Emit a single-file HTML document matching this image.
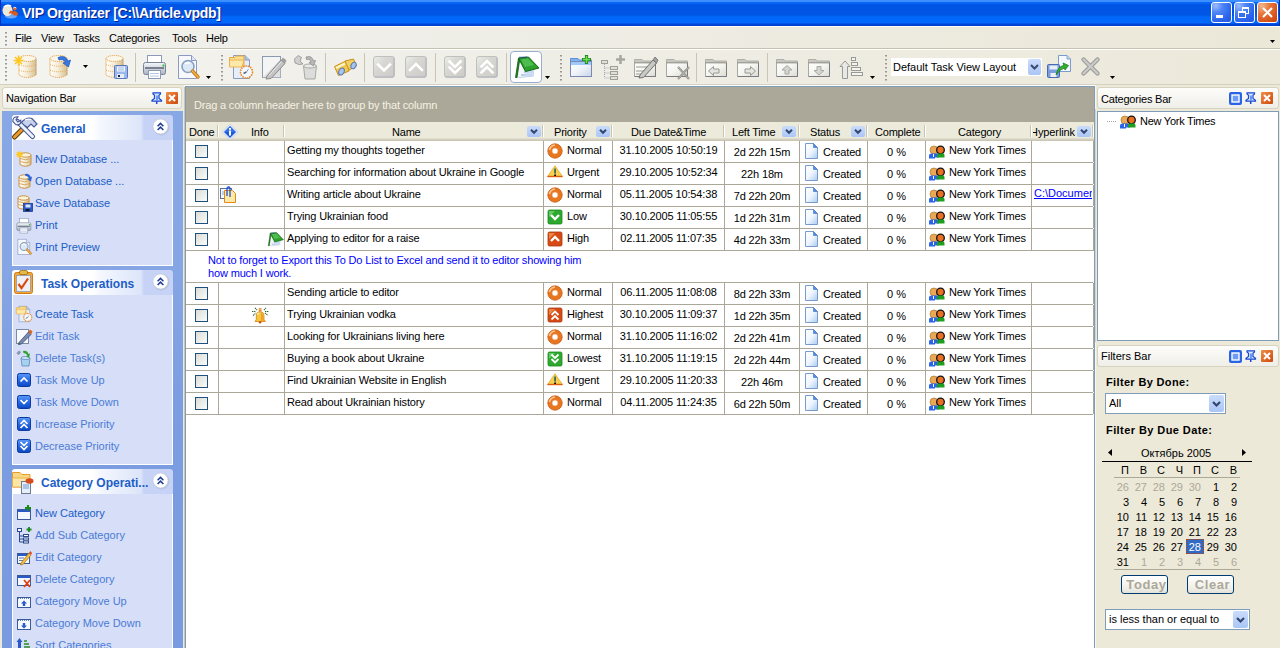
<!DOCTYPE html><html><head><meta charset="utf-8"><style>
*{margin:0;padding:0;box-sizing:border-box}
html,body{width:1280px;height:648px;overflow:hidden;background:#ECE9D8;font-family:"Liberation Sans",sans-serif;font-size:11px;color:#000}
body{position:relative}
.a{position:absolute}
.t{position:absolute;white-space:nowrap;line-height:13px}
svg{position:absolute;overflow:visible}
</style></head><body>
<div class="a" style="left:0px;top:0px;width:1280px;height:26px;background:linear-gradient(#3D8EFF 0,#3D8EFF 2px,#0866F6 2px,#0866F6 4px,#0055E5 4px,#0055E5 15px,#0062F2 16px,#0068FA 17px,#0069FB 23px,#0046D8 24px,#0040D0 26px)"></div>
<div class="a" style="left:0px;top:0px;width:1px;height:26px;background:#0030C0"></div>
<div class="a" style="left:1279px;top:0px;width:1px;height:26px;background:#0030C0"></div>
<div class="t" style="left:22px;top:5px;color:#fff;font-weight:bold;font-size:14px;line-height:17px;letter-spacing:-0.3px;text-shadow:1px 1px 0 #0A1E8C">VIP Organizer [C:\\Article.vpdb]</div>
<svg style="left:1px;top:1px;" width="19" height="19" viewBox="0 0 19 19"><ellipse cx="10" cy="15" rx="6" ry="2.5" fill="#9EC0F4" opacity="0.7"/><ellipse cx="6.5" cy="9.5" rx="5" ry="5.5" fill="#ECE8DC"/><path d="M3 6Q6 3 10 5" stroke="#fff" stroke-width="1.5" fill="none"/><path d="M7.5 12.5L9.5 9.5L12.5 10.5L14 10L17 12L16.5 14.5L13 14.5L11.5 12.5Z" fill="#E05A10"/><circle cx="13.8" cy="7.8" r="1.8" fill="#E8601A"/><path d="M12.3 7Q13.8 5.5 15.3 7" stroke="#fff" stroke-width="0.9" fill="none"/></svg>
<div class="a" style="left:1211px;top:2px;width:21px;height:21px;border:1px solid #fff;border-radius:3px;background:radial-gradient(circle at 20% 15%,#9DBCFF 0,#4F86F5 30%,#2A64EE 70%,#2058E0 100%)"><div class="a" style="left:4px;top:12px;width:7px;height:3px;background:#fff"></div></div>
<div class="a" style="left:1234px;top:2px;width:21px;height:21px;border:1px solid #fff;border-radius:3px;background:radial-gradient(circle at 20% 15%,#9DBCFF 0,#4F86F5 30%,#2A64EE 70%,#2058E0 100%)"><div class="a" style="left:7px;top:4px;width:7px;height:7px;border:1px solid #fff;border-top-width:2px"></div><div class="a" style="left:3px;top:8px;width:8px;height:7px;border:1px solid #fff;border-top-width:2px;background:#3A6EEE"></div></div>
<div class="a" style="left:1257px;top:2px;width:21px;height:21px;border:1px solid #fff;border-radius:3px;background:radial-gradient(circle at 20% 15%,#F0B890 0,#E8783C 35%,#D5521A 75%,#C84510 100%)"><svg style="left:4px;top:4px" width="11" height="11"><path d="M1 1L10 10M10 1L1 10" stroke="#fff" stroke-width="2"/></svg></div>
<div class="a" style="left:0px;top:26px;width:1280px;height:1px;background:#FFFBF0"></div>
<div class="a" style="left:0px;top:27px;width:1280px;height:21px;background:linear-gradient(90deg,#F2F2EE 0,#EFEEE8 30%,#EBE8D8 100%)"></div>
<div class="a" style="left:0px;top:48px;width:1280px;height:1px;background:#C5C2B2"></div>
<div class="a" style="left:5px;top:32px;width:2px;height:14px;background:repeating-linear-gradient(#9C9A90 0 1px,#C4C2B8 1px 2px,transparent 2px 4px)"></div>
<div class="t" style="left:15px;top:32px;letter-spacing:-0.25px">File</div>
<div class="t" style="left:41px;top:32px;letter-spacing:-0.25px">View</div>
<div class="t" style="left:73px;top:32px;letter-spacing:-0.25px">Tasks</div>
<div class="t" style="left:109px;top:32px;letter-spacing:-0.25px">Categories</div>
<div class="t" style="left:172px;top:32px;letter-spacing:-0.25px">Tools</div>
<div class="t" style="left:206px;top:32px;letter-spacing:-0.25px">Help</div>
<svg style="left:1270px;top:40px;" width="5" height="3" viewBox="0 0 5 3"><path d="M0 0H5L2.5 3Z" fill="#000"/></svg>
<div class="a" style="left:0px;top:49px;width:1280px;height:1px;background:#FFFFFF"></div>
<div class="a" style="left:0px;top:50px;width:1280px;height:34px;background:linear-gradient(90deg,#F4F4F0 0,#F0EFE9 30%,#ECE9DA 100%)"></div>
<div class="a" style="left:0px;top:84px;width:1280px;height:1px;background:#D5D1C0"></div>
<div class="a" style="left:5px;top:55px;width:2px;height:26px;background:repeating-linear-gradient(#9C9A90 0 1px,#C4C2B8 1px 2px,transparent 2px 4px)"></div>
<div class="a" style="left:221px;top:55px;width:2px;height:26px;background:repeating-linear-gradient(#9C9A90 0 1px,#C4C2B8 1px 2px,transparent 2px 4px)"></div>
<div class="a" style="left:560px;top:55px;width:2px;height:26px;background:repeating-linear-gradient(#9C9A90 0 1px,#C4C2B8 1px 2px,transparent 2px 4px)"></div>
<div class="a" style="left:885px;top:55px;width:2px;height:26px;background:repeating-linear-gradient(#9C9A90 0 1px,#C4C2B8 1px 2px,transparent 2px 4px)"></div>
<div class="a" style="left:135px;top:53px;width:1px;height:29px;background:#C8C5B5"></div>
<div class="a" style="left:325px;top:53px;width:1px;height:29px;background:#C8C5B5"></div>
<div class="a" style="left:364px;top:53px;width:1px;height:29px;background:#C8C5B5"></div>
<div class="a" style="left:435px;top:53px;width:1px;height:29px;background:#C8C5B5"></div>
<div class="a" style="left:506px;top:53px;width:1px;height:29px;background:#C8C5B5"></div>
<div class="a" style="left:696px;top:53px;width:1px;height:29px;background:#C8C5B5"></div>
<div class="a" style="left:767px;top:53px;width:1px;height:29px;background:#C8C5B5"></div>
<div class="a" style="left:510px;top:51px;width:32px;height:32px;border:1px solid #98AED0;border-radius:4px;background:#FFFFFF"></div>
<svg style="left:13px;top:55px;" width="25" height="25" viewBox="0 0 25 25"><g transform="translate(5,0)"><defs><linearGradient id="g1" x1="0" y1="0" x2="1" y2="0"><stop offset="0" stop-color="#FFFFFF"/><stop offset="0.45" stop-color="#F6EEDC"/><stop offset="1" stop-color="#D8C090"/></linearGradient></defs><path d="M1 3.5V20Q9.5 25 18 20V3.5" fill="url(#g1)" stroke="#E8A040" stroke-width="1" stroke-dasharray="1.2 0.8"/><ellipse cx="9.5" cy="3.5" rx="8.5" ry="3" fill="#FBF6EA" stroke="#E8A040" stroke-width="1" stroke-dasharray="1.2 0.8"/><path d="M1 9.5Q9.5 13 18 9.5M1 15Q9.5 18.5 18 15" stroke="#E8A848" stroke-width="1" fill="none" stroke-dasharray="1 1"/><path d="M18 4V20" stroke="#9A9AA8" stroke-width="0.8" opacity="0.6"/></g><path d="M0.5 5.5L10.5 5.5M2.0 2.0L9.0 9.0M5.5 0.5L5.5 10.5M9.0 2.0L2.0 9.0" stroke="#FFC820" stroke-width="1.6"/></svg>
<svg style="left:48px;top:55px;" width="25" height="25" viewBox="0 0 25 25"><g transform="translate(1,0)"><defs><linearGradient id="g2" x1="0" y1="0" x2="1" y2="0"><stop offset="0" stop-color="#FFFFFF"/><stop offset="0.45" stop-color="#F6EEDC"/><stop offset="1" stop-color="#D8C090"/></linearGradient></defs><path d="M1 3.5V20Q9.5 25 18 20V3.5" fill="url(#g2)" stroke="#E8A040" stroke-width="1" stroke-dasharray="1.2 0.8"/><ellipse cx="9.5" cy="3.5" rx="8.5" ry="3" fill="#FBF6EA" stroke="#E8A040" stroke-width="1" stroke-dasharray="1.2 0.8"/><path d="M1 9.5Q9.5 13 18 9.5M1 15Q9.5 18.5 18 15" stroke="#E8A848" stroke-width="1" fill="none" stroke-dasharray="1 1"/><path d="M18 4V20" stroke="#9A9AA8" stroke-width="0.8" opacity="0.6"/></g><path d="M10 2.5Q17 -0.5 20 6L22.5 5L20.5 12L15 8L17.5 7.2Q15.5 3.5 11 5Z" fill="#3A78E0" stroke="#1A50B8" stroke-width="0.7"/></svg>
<svg style="left:105px;top:55px;" width="25" height="25" viewBox="0 0 25 25"><g transform="translate(0,0)"><defs><linearGradient id="g3" x1="0" y1="0" x2="1" y2="0"><stop offset="0" stop-color="#FFFFFF"/><stop offset="0.45" stop-color="#F6EEDC"/><stop offset="1" stop-color="#D8C090"/></linearGradient></defs><path d="M1 3.5V20Q9.5 25 18 20V3.5" fill="url(#g3)" stroke="#E8A040" stroke-width="1" stroke-dasharray="1.2 0.8"/><ellipse cx="9.5" cy="3.5" rx="8.5" ry="3" fill="#FBF6EA" stroke="#E8A040" stroke-width="1" stroke-dasharray="1.2 0.8"/><path d="M1 9.5Q9.5 13 18 9.5M1 15Q9.5 18.5 18 15" stroke="#E8A848" stroke-width="1" fill="none" stroke-dasharray="1 1"/><path d="M18 4V20" stroke="#9A9AA8" stroke-width="0.8" opacity="0.6"/></g><rect x="9.5" y="10.5" width="13" height="13" rx="1" fill="#9CB8EC" stroke="#5A78B8" stroke-width="1"/><rect x="12" y="11.5" width="8" height="5" fill="#F4F8FF"/><path d="M13 13H19M13 15H19" stroke="#7A98D0" stroke-width="0.7"/><rect x="12" y="19" width="7" height="4" fill="#E8ECF4"/><rect x="13" y="20" width="2" height="2" fill="#202840"/></svg>
<svg style="left:143px;top:55px;" width="25" height="25" viewBox="0 0 25 25"><defs><linearGradient id="g4" x1="0" y1="0" x2="0" y2="1"><stop offset="0" stop-color="#F4F6FA"/><stop offset="0.5" stop-color="#D0D6E0"/><stop offset="1" stop-color="#A8B0C0"/></linearGradient></defs><rect x="4.5" y="0.5" width="14" height="10" fill="#FFFFFF" stroke="#8A9AB8" stroke-width="1"/><rect x="0.5" y="7.5" width="22" height="12" rx="2" fill="url(#g4)" stroke="#7A8498" stroke-width="1"/><rect x="2" y="12" width="19" height="2" fill="#7A8090"/><rect x="5.5" y="15.5" width="12" height="8" fill="#fff" stroke="#8A9AB8" stroke-width="1"/><path d="M7 18.5H16M7 21H16" stroke="#A8B8D8" stroke-width="0.8"/><rect x="19.5" y="9.5" width="2" height="2" fill="#30C030"/></svg>
<svg style="left:178px;top:55px;" width="25" height="25" viewBox="0 0 25 25"><path d="M0.5 0.5H13.5L18.5 5.5V23.5H0.5Z" fill="#F6F8FC" stroke="#8A9AC0" stroke-width="1"/><path d="M13.5 0.5V5.5H18.5" fill="#DDE6F4" stroke="#8A9AC0" stroke-width="1"/><circle cx="10" cy="11.5" r="6" fill="#DCEAF8" stroke="#8AA0C0" stroke-width="1.6"/><path d="M7 9Q9 7 12 8" stroke="#fff" stroke-width="1.5" fill="none"/><path d="M14.5 16L20 22" stroke="#C07818" stroke-width="3.4" stroke-linecap="round"/><path d="M14.5 16L20 22" stroke="#F0B048" stroke-width="1.8" stroke-linecap="round"/></svg>
<svg style="left:229px;top:55px;" width="25" height="25" viewBox="0 0 25 25"><path d="M4.5 0.5H16L20.5 5V23.5H4.5Z" fill="#E8EEF8" stroke="#8A9AC0" stroke-width="1"/><path d="M16 0.5V5H20.5" fill="#A8C8F0" stroke="#8A9AC0" stroke-width="1"/><path d="M0.5 2.5H6L7.5 1H15V11H0.5Z" fill="#F8E090" stroke="#E8A840" stroke-width="1"/><path d="M0.5 5H15L13 12H0.5Z" fill="#FCE8A8" stroke="#E8A840" stroke-width="0.8"/><circle cx="17.5" cy="17" r="6" fill="#F4F8FF" stroke="#E88A28" stroke-width="1.6" stroke-dasharray="1.6 0.8"/><path d="M17.5 17L14.5 18.5" stroke="#5A6A88" stroke-width="1.4"/><path d="M17.5 17L19.5 14" stroke="#8A9AB0" stroke-width="1"/></svg>
<svg style="left:262px;top:55px;" width="25" height="25" viewBox="0 0 25 25"><rect x="0.5" y="1.5" width="18" height="21" fill="#F4F4F4" stroke="#8A9AB0" stroke-width="1"/><path d="M0.5 22.5L18.5 4.5V22.5Z" fill="#D8D8D8" opacity="0.7"/><path d="M5 21L19 5L23 8.5L9 23.5L4 24Z" fill="#C4C4C4" stroke="#8A8A8A" stroke-width="1"/><path d="M7 20.5L19.5 6.5" stroke="#E8E8E8" stroke-width="1"/><path d="M19 5L21 2.5L24.5 5.5L23 8.5Z" fill="#A0A0A0"/></svg>
<svg style="left:294px;top:55px;" width="25" height="25" viewBox="0 0 25 25"><path d="M9.5 11H22.5L21 24H11Z" fill="#DCDCDA" stroke="#A8A8A4" stroke-width="1"/><ellipse cx="16" cy="11" rx="6.5" ry="2" fill="#EAEAE8" stroke="#A8A8A4" stroke-width="1"/><path d="M0.5 4L4 0.5L7.5 2.5L6 6L9 9L5 9.5L1 8Z" fill="#D0D0D0" stroke="#909090" stroke-width="0.8"/><path d="M12 2Q18 0 19.5 6L21.5 5.5L19.5 11L15 7.5L17 7Q16 3.5 12.5 4.5Z" fill="#B8B8B8" stroke="#888" stroke-width="0.7"/></svg>
<svg style="left:333px;top:58px;" width="25" height="25" viewBox="0 0 25 25"><path d="M1.5 8.5L13 3L15.5 7L16 13L5.5 17.5Z" fill="#F0C850" stroke="#C89020" stroke-width="1"/><path d="M3 10L12 5.5" stroke="#FFF4C8" stroke-width="2"/><path d="M12 3L20.5 1L23.5 8L16 12Z" fill="#F4D060" stroke="#C89020" stroke-width="1"/><ellipse cx="8.5" cy="13.5" rx="2.6" ry="3.6" transform="rotate(25 8.5 13.5)" fill="#A8C4F0" stroke="#5A78B0" stroke-width="1"/><ellipse cx="20.5" cy="7.5" rx="2.4" ry="3.4" transform="rotate(25 20.5 7.5)" fill="#A8C4F0" stroke="#5A78B0" stroke-width="1"/></svg>
<svg style="left:373px;top:56px;" width="25" height="25" viewBox="0 0 25 25"><defs><linearGradient id="g5" x1="0" y1="0" x2="1" y2="1"><stop offset="0" stop-color="#EEEEEC"/><stop offset="0.35" stop-color="#D8D8D4"/><stop offset="1" stop-color="#CCCAC4"/></linearGradient></defs><rect x="0.5" y="0.5" width="21" height="21" rx="2.5" fill="url(#g5)" stroke="#C0C0BC" stroke-width="1"/><path d="M1.5 20.5H20.5V1.5" stroke="#A8B0C8" stroke-width="1" fill="none" stroke-dasharray="1 1"/><path d="M5 8.5L11 14.5L17 8.5" stroke="#fff" stroke-width="2.6" fill="none" stroke-linecap="square"/></svg>
<svg style="left:405px;top:56px;" width="25" height="25" viewBox="0 0 25 25"><defs><linearGradient id="g6" x1="0" y1="0" x2="1" y2="1"><stop offset="0" stop-color="#EEEEEC"/><stop offset="0.35" stop-color="#D8D8D4"/><stop offset="1" stop-color="#CCCAC4"/></linearGradient></defs><rect x="0.5" y="0.5" width="21" height="21" rx="2.5" fill="url(#g6)" stroke="#C0C0BC" stroke-width="1"/><path d="M1.5 20.5H20.5V1.5" stroke="#A8B0C8" stroke-width="1" fill="none" stroke-dasharray="1 1"/><path d="M5 14L11 8L17 14" stroke="#fff" stroke-width="2.6" fill="none" stroke-linecap="square"/></svg>
<svg style="left:444px;top:56px;" width="25" height="25" viewBox="0 0 25 25"><defs><linearGradient id="g7" x1="0" y1="0" x2="1" y2="1"><stop offset="0" stop-color="#EEEEEC"/><stop offset="0.35" stop-color="#D8D8D4"/><stop offset="1" stop-color="#CCCAC4"/></linearGradient></defs><rect x="0.5" y="0.5" width="21" height="21" rx="2.5" fill="url(#g7)" stroke="#C0C0BC" stroke-width="1"/><path d="M1.5 20.5H20.5V1.5" stroke="#A8B0C8" stroke-width="1" fill="none" stroke-dasharray="1 1"/><path d="M5.5 5.5L11 11L16.5 5.5M5.5 11.5L11 17L16.5 11.5" stroke="#fff" stroke-width="2.6" fill="none" stroke-linecap="square"/></svg>
<svg style="left:476px;top:56px;" width="25" height="25" viewBox="0 0 25 25"><defs><linearGradient id="g8" x1="0" y1="0" x2="1" y2="1"><stop offset="0" stop-color="#EEEEEC"/><stop offset="0.35" stop-color="#D8D8D4"/><stop offset="1" stop-color="#CCCAC4"/></linearGradient></defs><rect x="0.5" y="0.5" width="21" height="21" rx="2.5" fill="url(#g8)" stroke="#C0C0BC" stroke-width="1"/><path d="M1.5 20.5H20.5V1.5" stroke="#A8B0C8" stroke-width="1" fill="none" stroke-dasharray="1 1"/><path d="M5.5 10.5L11 5L16.5 10.5M5.5 16.5L11 11L16.5 16.5" stroke="#fff" stroke-width="2.6" fill="none" stroke-linecap="square"/></svg>
<svg style="left:570px;top:55px;" width="25" height="25" viewBox="0 0 25 25"><defs><linearGradient id="g9" x1="0" y1="0" x2="1" y2="1"><stop offset="0" stop-color="#FFFFFF"/><stop offset="0.5" stop-color="#F0F4FA"/><stop offset="1" stop-color="#C8D4E8"/></linearGradient></defs><g transform="translate(0,3)"><path d="M0.5 0.5H8L9.5 2H21.5V5H0.5Z" fill="#80B4F0" stroke="#5A90D8" stroke-width="1"/><rect x="0.5" y="3.5" width="21" height="15" fill="url(#g9)" stroke="#7A8AB0" stroke-width="1"/><rect x="1" y="4" width="20" height="3" fill="#A0C8F8"/></g><path d="M16.5 0V9M12 4.5H21" stroke="#208A20" stroke-width="3.2"/><path d="M16.5 1V8M13 4.5H20" stroke="#70E050" stroke-width="1.4"/></svg>
<svg style="left:601px;top:55px;" width="25" height="25" viewBox="0 0 25 25"><rect x="0.5" y="5.5" width="6" height="3" fill="#E0E0D8" stroke="#A0A098"/><path d="M3.5 9V23M3.5 13H9M3.5 18H9M3.5 23H9" stroke="#A0A8B8" stroke-dasharray="1 1"/><rect x="9.5" y="11.5" width="7" height="3" fill="#E0E0D8" stroke="#A0A098"/><rect x="9.5" y="16.5" width="7" height="3" fill="#E0E0D8" stroke="#A0A098"/><rect x="9.5" y="21.5" width="7" height="3" fill="#E0E0D8" stroke="#A0A098"/><path d="M19.5 0V9M15 4.5H24" stroke="#A8A8A0" stroke-width="2.6"/></svg>
<svg style="left:634px;top:55px;" width="25" height="25" viewBox="0 0 25 25"><g transform="translate(0,3)"><defs><linearGradient id="g10" x1="0" y1="0" x2="1" y2="1"><stop offset="0" stop-color="#FFFFFF"/><stop offset="0.5" stop-color="#F4F4F0"/><stop offset="1" stop-color="#DCDCD4"/></linearGradient></defs><path d="M0.5 1.5H8L9.5 3H21.5V6H0.5Z" fill="#C8C8C0" stroke="#B0B0A8" stroke-width="1"/><rect x="0.5" y="4.5" width="21" height="14" fill="url(#g10)" stroke="#A8A8A0" stroke-width="1"/><path d="M0.5 5H21.5" stroke="#989890" stroke-width="1.4" stroke-dasharray="1 1"/><path d="M1 18.5H21.5V5" stroke="#7A7A80" stroke-width="1" fill="none"/></g><path d="M2 16H12M2 19H11M2 12H14" stroke="#9A9A92" stroke-width="1"/><path d="M6 20L19 5L22.5 8L9.5 22.5L5 23Z" fill="#C8C8C4" stroke="#707070" stroke-width="1"/><path d="M19 5L21 2L24 5L22.5 8Z" fill="#A0A0A0" stroke="#707070" stroke-width="0.8"/></svg>
<svg style="left:666px;top:55px;" width="25" height="25" viewBox="0 0 25 25"><g transform="translate(0,3)"><defs><linearGradient id="g11" x1="0" y1="0" x2="1" y2="1"><stop offset="0" stop-color="#FFFFFF"/><stop offset="0.5" stop-color="#F4F4F0"/><stop offset="1" stop-color="#DCDCD4"/></linearGradient></defs><path d="M0.5 1.5H8L9.5 3H21.5V6H0.5Z" fill="#C8C8C0" stroke="#B0B0A8" stroke-width="1"/><rect x="0.5" y="4.5" width="21" height="14" fill="url(#g11)" stroke="#A8A8A0" stroke-width="1"/><path d="M0.5 5H21.5" stroke="#989890" stroke-width="1.4" stroke-dasharray="1 1"/><path d="M1 18.5H21.5V5" stroke="#7A7A80" stroke-width="1" fill="none"/></g><path d="M12 12L23 24M23 12L12 24" stroke="#8A8A84" stroke-width="2"/><path d="M12 12L23 24M23 12L12 24" stroke="#C8C8C0" stroke-width="0.8"/></svg>
<svg style="left:705px;top:55px;" width="25" height="25" viewBox="0 0 25 25"><g transform="translate(0,3)"><defs><linearGradient id="g12" x1="0" y1="0" x2="1" y2="1"><stop offset="0" stop-color="#FFFFFF"/><stop offset="0.5" stop-color="#F4F4F0"/><stop offset="1" stop-color="#DCDCD4"/></linearGradient></defs><path d="M0.5 1.5H8L9.5 3H21.5V6H0.5Z" fill="#C8C8C0" stroke="#B0B0A8" stroke-width="1"/><rect x="0.5" y="4.5" width="21" height="14" fill="url(#g12)" stroke="#A8A8A0" stroke-width="1"/><path d="M0.5 5H21.5" stroke="#989890" stroke-width="1.4" stroke-dasharray="1 1"/><path d="M1 18.5H21.5V5" stroke="#7A7A80" stroke-width="1" fill="none"/><path d="M3.5 13L8.5 8.5V11H14V15H8.5V17.5Z" fill="#E4E4E0" stroke="#9A9A94" stroke-width="1"/></g></svg>
<svg style="left:737px;top:55px;" width="25" height="25" viewBox="0 0 25 25"><g transform="translate(0,3)"><defs><linearGradient id="g13" x1="0" y1="0" x2="1" y2="1"><stop offset="0" stop-color="#FFFFFF"/><stop offset="0.5" stop-color="#F4F4F0"/><stop offset="1" stop-color="#DCDCD4"/></linearGradient></defs><path d="M0.5 1.5H8L9.5 3H21.5V6H0.5Z" fill="#C8C8C0" stroke="#B0B0A8" stroke-width="1"/><rect x="0.5" y="4.5" width="21" height="14" fill="url(#g13)" stroke="#A8A8A0" stroke-width="1"/><path d="M0.5 5H21.5" stroke="#989890" stroke-width="1.4" stroke-dasharray="1 1"/><path d="M1 18.5H21.5V5" stroke="#7A7A80" stroke-width="1" fill="none"/><path d="M18.5 13L13.5 8.5V11H8V15H13.5V17.5Z" fill="#E4E4E0" stroke="#9A9A94" stroke-width="1"/></g></svg>
<svg style="left:776px;top:55px;" width="25" height="25" viewBox="0 0 25 25"><g transform="translate(0,3)"><defs><linearGradient id="g14" x1="0" y1="0" x2="1" y2="1"><stop offset="0" stop-color="#FFFFFF"/><stop offset="0.5" stop-color="#F4F4F0"/><stop offset="1" stop-color="#DCDCD4"/></linearGradient></defs><path d="M0.5 1.5H8L9.5 3H21.5V6H0.5Z" fill="#C8C8C0" stroke="#B0B0A8" stroke-width="1"/><rect x="0.5" y="4.5" width="21" height="14" fill="url(#g14)" stroke="#A8A8A0" stroke-width="1"/><path d="M0.5 5H21.5" stroke="#989890" stroke-width="1.4" stroke-dasharray="1 1"/><path d="M1 18.5H21.5V5" stroke="#7A7A80" stroke-width="1" fill="none"/><path d="M11 7.5L16 12H13V16H9V12H6Z" fill="#D4D4D0" stroke="#A8A8A4" stroke-width="1"/></g></svg>
<svg style="left:808px;top:55px;" width="25" height="25" viewBox="0 0 25 25"><g transform="translate(0,3)"><defs><linearGradient id="g15" x1="0" y1="0" x2="1" y2="1"><stop offset="0" stop-color="#FFFFFF"/><stop offset="0.5" stop-color="#F4F4F0"/><stop offset="1" stop-color="#DCDCD4"/></linearGradient></defs><path d="M0.5 1.5H8L9.5 3H21.5V6H0.5Z" fill="#C8C8C0" stroke="#B0B0A8" stroke-width="1"/><rect x="0.5" y="4.5" width="21" height="14" fill="url(#g15)" stroke="#A8A8A0" stroke-width="1"/><path d="M0.5 5H21.5" stroke="#989890" stroke-width="1.4" stroke-dasharray="1 1"/><path d="M1 18.5H21.5V5" stroke="#7A7A80" stroke-width="1" fill="none"/><path d="M11 17L16 12.5H13V8.5H9V12.5H6Z" fill="#D4D4D0" stroke="#A8A8A4" stroke-width="1"/></g></svg>
<svg style="left:840px;top:57px;" width="25" height="25" viewBox="0 0 25 25"><path d="M5 4L10 9.5H7.5V21.5H2.5V9.5H0Z" fill="#E8E8E6" stroke="#9A9A94" stroke-width="1"/><rect x="11.5" y="0.5" width="4" height="3" fill="#F4F4F0" stroke="#9A9A94"/><rect x="11.5" y="5.5" width="6" height="3" fill="#F4F4F0" stroke="#9A9A94"/><rect x="11.5" y="10.5" width="9" height="3" fill="#F4F4F0" stroke="#9A9A94"/><rect x="11.5" y="15.5" width="11" height="3" fill="#F4F4F0" stroke="#9A9A94"/></svg>
<svg style="left:1047px;top:55px;" width="25" height="25" viewBox="0 0 25 25"><path d="M11.5 0.5H20L23.5 4V16.5H11.5Z" fill="#F4F8FF" stroke="#7A9AD0" stroke-width="1"/><path d="M20 0.5V4H23.5" fill="#B8D0F0" stroke="#7A9AD0" stroke-width="0.8"/><rect x="0.5" y="9.5" width="12" height="13" rx="1" fill="#7A9CE0" stroke="#4A6AB0" stroke-width="1"/><rect x="2.5" y="10.5" width="8" height="4" fill="#E8EEF8"/><rect x="3.5" y="18" width="6" height="4" fill="#F0F0F0"/><path d="M9 20Q11 11 17 10.5L16 8L21.5 10.5L18 15L17.5 13Q13 14 9 20Z" fill="#30B030" stroke="#1A7A1A" stroke-width="0.8"/></svg>
<svg style="left:1081px;top:57px;" width="25" height="25" viewBox="0 0 25 25"><path d="M2.5 2.5L16.5 16.5M16.5 2.5L2.5 16.5" stroke="#9A9A98" stroke-width="4.4" stroke-linecap="round"/><path d="M2.5 2.5L16.5 16.5M16.5 2.5L2.5 16.5" stroke="#CACAC8" stroke-width="2.4" stroke-linecap="round"/></svg>
<svg style="left:515px;top:56px;" width="25" height="25" viewBox="0 0 25 25"><path d="M1.5 21L4 4L10.5 15L18.5 13V20L5 21.5Z" fill="#F4F6FA" stroke="#B8C4D8" stroke-width="0.8"/><path d="M9 16H18M6 19H17" stroke="#7AA0D8" stroke-width="1"/><path d="M11 14.5L19 13V20L9 21Z" fill="#C8DCF4" opacity="0.8"/><path d="M3.5 2L13.5 1L24 12L10.5 15.5Z" fill="#2EA02E" stroke="#0E6A0E" stroke-width="1"/><path d="M6 3.5L13 2.5L19 9L10 11Z" fill="#58C858" opacity="0.75"/><path d="M3.5 2L0.5 21.5L2 21.5L4.5 5Z" fill="#1E8A1E" stroke="#0E5A0E" stroke-width="0.8"/><path d="M5 0.5V2.5M7 0.5V2.5M9 0.3V2.3M11 0.2V2.2" stroke="#2040A0" stroke-width="0.8"/></svg>
<svg style="left:83px;top:65px;" width="5" height="3" viewBox="0 0 5 3"><path d="M0 0H5L2.5 3Z" fill="#000"/></svg>
<svg style="left:206px;top:76px;" width="5" height="3" viewBox="0 0 5 3"><path d="M0 0H5L2.5 3Z" fill="#000"/></svg>
<svg style="left:545px;top:76px;" width="5" height="3" viewBox="0 0 5 3"><path d="M0 0H5L2.5 3Z" fill="#000"/></svg>
<svg style="left:870px;top:76px;" width="5" height="3" viewBox="0 0 5 3"><path d="M0 0H5L2.5 3Z" fill="#000"/></svg>
<svg style="left:1110px;top:76px;" width="5" height="3" viewBox="0 0 5 3"><path d="M0 0H5L2.5 3Z" fill="#000"/></svg>
<div class="a" style="left:891px;top:58px;width:151px;height:18px;background:#fff"></div>
<div class="t" style="left:893px;top:61px;">Default Task View Layout</div>
<div class="a" style="left:1028px;top:59px;width:13px;height:16px;background:linear-gradient(#CADCFC,#AAC6F5);border-radius:2px"></div>
<svg style="left:1030px;top:64px;" width="9" height="6" viewBox="0 0 9 6"><path d="M1 1L4.5 4.5L8 1" stroke="#3A4A70" stroke-width="2" fill="none"/></svg>
<div class="a" style="left:0px;top:85px;width:184px;height:563px;background:#ECE9D8"></div>
<div class="a" style="left:183px;top:85px;width:1px;height:563px;background:#EEEAD8"></div>
<div class="a" style="left:2px;top:87px;width:180px;height:22px;background:linear-gradient(#FDFDFB,#EFEEE8);border:1px solid #D6D3C2;border-radius:3px"></div>
<div class="t" style="left:6px;top:92px;letter-spacing:-0.15px">Navigation Bar</div>
<svg style="left:151px;top:92px;" width="11" height="12" viewBox="0 0 11 12"><path d="M2 0.8H9.5V2L8 3.2V6.5L10.5 8.2V9.2H1V8.2L3.5 6.5V3.2L2 2Z" fill="#D8E6FF" stroke="#1A48D0" stroke-width="1.2"/><path d="M6 3.5V8" stroke="#3A78F0" stroke-width="1.4"/><path d="M5.7 9.2V12" stroke="#1A48D0" stroke-width="1.5"/></svg>
<svg style="left:166px;top:92px;" width="12" height="12" viewBox="0 0 12 12"><defs><linearGradient id="g16" x1="0" y1="0" x2="1" y2="1"><stop offset="0" stop-color="#F09048"/><stop offset="0.5" stop-color="#E06A28"/><stop offset="1" stop-color="#C84A10"/></linearGradient></defs><rect x="0" y="0" width="12" height="12" rx="1" fill="url(#g16)"/><path d="M3 3L9 9M9 3L3 9" stroke="#fff" stroke-width="2"/></svg>
<div class="a" style="left:2px;top:111px;width:181px;height:537px;background:linear-gradient(#88A7E5,#86A5E4 30%,#7C9DE2 55%,#789AE0 100%)"></div>
<div class="a" style="left:12px;top:115px;width:161px;height:25px;background:linear-gradient(90deg,#FFFFFF 0,#FFFFFF 50%,#F4F7FE 55%,#DCE5F9 80%,#C6D3F7 82%,#C6D3F7 100%);border-radius:3px 3px 0 0"></div>
<svg style="left:12px;top:116px;" width="26" height="24" viewBox="0 0 26 24"><path d="M2.5 21L14.5 9" stroke="#5A4010" stroke-width="5" stroke-linecap="round"/><path d="M2.5 21L14.5 9" stroke="#EC9A2C" stroke-width="3" stroke-linecap="round"/><path d="M9.5 6.5Q14 1 20 2.5L25 8L22 11L19 8L15.5 11.5L11 8.5Z" fill="#C8D2EC" stroke="#4A5A98" stroke-width="1.2"/><path d="M13 4Q16 2.5 19 3.5" stroke="#fff" stroke-width="1.2" fill="none"/><path d="M5.5 5.5L20.5 20.5" stroke="#4A5A98" stroke-width="5.2" stroke-linecap="round"/><path d="M5.5 5.5L20.5 20.5" stroke="#EEF2FC" stroke-width="3" stroke-linecap="round"/><path d="M0.8 5.5Q0.5 0.5 6 0.8L4 3.8L5.8 6L8.8 4.2Q9.5 9.5 4 8.8Z" fill="#EEF2FC" stroke="#4A5A98" stroke-width="1.1"/></svg>
<div class="t" style="left:41px;top:123px;font-weight:bold;font-size:12px;line-height:13px;color:#215DC6">General</div>
<svg style="left:152px;top:118px;" width="18" height="18" viewBox="0 0 18 18"><circle cx="9.2" cy="9.2" r="8.3" fill="#A8B4D0" opacity="0.55"/><circle cx="8.5" cy="8.5" r="7.6" fill="#fff" stroke="#C4CCDC" stroke-width="0.8"/><path d="M5.6 8.3L8.5 5.4L11.4 8.3M5.6 12L8.5 9.1L11.4 12" stroke="#1E3C96" stroke-width="1.5" fill="none"/></svg>
<div class="a" style="left:12px;top:140px;width:161px;height:126px;background:#D6DFF7;border:1px solid #fff;border-top:0"></div>
<svg style="left:16px;top:151px;" width="16" height="16" viewBox="0 0 16 16"><g transform="translate(3,1)"><defs><linearGradient id="g17" x1="0" y1="0" x2="1" y2="0"><stop offset="0" stop-color="#FFFFFF"/><stop offset="0.45" stop-color="#F6EEDC"/><stop offset="1" stop-color="#D8C090"/></linearGradient></defs><path d="M1 3V12.5Q6.5 16 12 12.5V3" fill="url(#g17)" stroke="#C89040" stroke-width="1"/><ellipse cx="6.5" cy="3" rx="5.5" ry="2.2" fill="#FBF2DA" stroke="#C89040" stroke-width="1"/><path d="M1 6.5Q6.5 9 12 6.5M1 9.5Q6.5 12 12 9.5" stroke="#D8A050" stroke-width="0.9" fill="none"/></g><path d="M0.3 3.5L6.7 3.5M1.2 1.2L5.8 5.8M3.5 0.3L3.5 6.7M5.8 1.2L1.2 5.8" stroke="#FFC820" stroke-width="1.6"/></svg>
<div class="t" style="left:35px;top:153px;color:#215DC6">New Database ...</div>
<svg style="left:16px;top:173px;" width="16" height="16" viewBox="0 0 16 16"><g transform="translate(2,1)"><defs><linearGradient id="g18" x1="0" y1="0" x2="1" y2="0"><stop offset="0" stop-color="#FFFFFF"/><stop offset="0.45" stop-color="#F6EEDC"/><stop offset="1" stop-color="#D8C090"/></linearGradient></defs><path d="M1 3V12.5Q6.5 16 12 12.5V3" fill="url(#g18)" stroke="#C89040" stroke-width="1"/><ellipse cx="6.5" cy="3" rx="5.5" ry="2.2" fill="#FBF2DA" stroke="#C89040" stroke-width="1"/><path d="M1 6.5Q6.5 9 12 6.5M1 9.5Q6.5 12 12 9.5" stroke="#D8A050" stroke-width="0.9" fill="none"/></g><path d="M9 1Q13 0 14.5 4L16 3.5L15 8.5L11 6L13 5.5Q12 2.5 9.5 3Z" fill="#2A62D8"/></svg>
<div class="t" style="left:35px;top:175px;color:#215DC6">Open Database ...</div>
<svg style="left:16px;top:195px;" width="16" height="16" viewBox="0 0 16 16"><g transform="translate(1,0)"><defs><linearGradient id="g19" x1="0" y1="0" x2="1" y2="0"><stop offset="0" stop-color="#FFFFFF"/><stop offset="0.45" stop-color="#F6EEDC"/><stop offset="1" stop-color="#D8C090"/></linearGradient></defs><path d="M1 3V12.5Q6.5 16 12 12.5V3" fill="url(#g19)" stroke="#C89040" stroke-width="1"/><ellipse cx="6.5" cy="3" rx="5.5" ry="2.2" fill="#FBF2DA" stroke="#C89040" stroke-width="1"/><path d="M1 6.5Q6.5 9 12 6.5M1 9.5Q6.5 12 12 9.5" stroke="#D8A050" stroke-width="0.9" fill="none"/></g><rect x="7.5" y="8.5" width="9" height="8" fill="#2A5AC8" stroke="#1A3A90" stroke-width="0.8"/><rect x="9.5" y="9.5" width="5" height="3" fill="#D8E4FA"/><rect x="9.5" y="14" width="4" height="2" fill="#101828"/></svg>
<div class="t" style="left:35px;top:197px;color:#215DC6">Save Database</div>
<svg style="left:16px;top:217px;" width="16" height="16" viewBox="0 0 16 16"><g transform="translate(0.5,1) scale(0.64)"><defs><linearGradient id="g20" x1="0" y1="0" x2="0" y2="1"><stop offset="0" stop-color="#F4F6FA"/><stop offset="0.5" stop-color="#D0D6E0"/><stop offset="1" stop-color="#A8B0C0"/></linearGradient></defs><rect x="4.5" y="0.5" width="14" height="10" fill="#FFFFFF" stroke="#8A9AB8" stroke-width="1"/><rect x="0.5" y="7.5" width="22" height="12" rx="2" fill="url(#g20)" stroke="#7A8498" stroke-width="1"/><rect x="2" y="12" width="19" height="2" fill="#7A8090"/><rect x="5.5" y="15.5" width="12" height="8" fill="#fff" stroke="#8A9AB8" stroke-width="1"/><path d="M7 18.5H16M7 21H16" stroke="#A8B8D8" stroke-width="0.8"/><rect x="19.5" y="9.5" width="2" height="2" fill="#30C030"/></g></svg>
<div class="t" style="left:35px;top:219px;color:#215DC6">Print</div>
<svg style="left:16px;top:239px;" width="16" height="16" viewBox="0 0 16 16"><g transform="translate(1.5,0) scale(0.66)"><path d="M0.5 0.5H13.5L18.5 5.5V23.5H0.5Z" fill="#F6F8FC" stroke="#8A9AC0" stroke-width="1"/><path d="M13.5 0.5V5.5H18.5" fill="#DDE6F4" stroke="#8A9AC0" stroke-width="1"/><circle cx="10" cy="11.5" r="6" fill="#DCEAF8" stroke="#8AA0C0" stroke-width="1.6"/><path d="M7 9Q9 7 12 8" stroke="#fff" stroke-width="1.5" fill="none"/><path d="M14.5 16L20 22" stroke="#C07818" stroke-width="3.4" stroke-linecap="round"/><path d="M14.5 16L20 22" stroke="#F0B048" stroke-width="1.8" stroke-linecap="round"/></g></svg>
<div class="t" style="left:35px;top:241px;color:#215DC6">Print Preview</div>
<div class="a" style="left:12px;top:270px;width:161px;height:25px;background:linear-gradient(90deg,#FFFFFF 0,#FFFFFF 50%,#F4F7FE 55%,#DCE5F9 80%,#C6D3F7 82%,#C6D3F7 100%);border-radius:3px 3px 0 0"></div>
<svg style="left:12px;top:270px;" width="26" height="24" viewBox="0 0 26 24"><rect x="2.5" y="2.5" width="18" height="21" rx="2" fill="#F2A838" stroke="#D07A10" stroke-width="1"/><rect x="4.5" y="5.5" width="14" height="16" fill="#EEF0F6" stroke="#9098B0" stroke-width="0.8"/><rect x="7.5" y="0.5" width="8" height="4" rx="1.5" fill="#E8B848" stroke="#A07010" stroke-width="0.8"/><path d="M6.5 14L9.5 18L16 8.5" stroke="#D84A10" stroke-width="2.2" fill="none"/></svg>
<div class="t" style="left:41px;top:278px;font-weight:bold;font-size:12px;line-height:13px;color:#215DC6">Task Operations</div>
<svg style="left:152px;top:273px;" width="18" height="18" viewBox="0 0 18 18"><circle cx="9.2" cy="9.2" r="8.3" fill="#A8B4D0" opacity="0.55"/><circle cx="8.5" cy="8.5" r="7.6" fill="#fff" stroke="#C4CCDC" stroke-width="0.8"/><path d="M5.6 8.3L8.5 5.4L11.4 8.3M5.6 12L8.5 9.1L11.4 12" stroke="#1E3C96" stroke-width="1.5" fill="none"/></svg>
<div class="a" style="left:12px;top:295px;width:161px;height:170px;background:#D6DFF7;border:1px solid #fff;border-top:0"></div>
<svg style="left:16px;top:306px;" width="16" height="16" viewBox="0 0 16 16"><g transform="scale(0.67)"><path d="M4.5 0.5H16L20.5 5V23.5H4.5Z" fill="#E8EEF8" stroke="#8A9AC0" stroke-width="1"/><path d="M16 0.5V5H20.5" fill="#A8C8F0" stroke="#8A9AC0" stroke-width="1"/><path d="M0.5 2.5H6L7.5 1H15V11H0.5Z" fill="#F8E090" stroke="#E8A840" stroke-width="1"/><path d="M0.5 5H15L13 12H0.5Z" fill="#FCE8A8" stroke="#E8A840" stroke-width="0.8"/><circle cx="17.5" cy="17" r="6" fill="#F4F8FF" stroke="#E88A28" stroke-width="1.6" stroke-dasharray="1.6 0.8"/><path d="M17.5 17L14.5 18.5" stroke="#5A6A88" stroke-width="1.4"/><path d="M17.5 17L19.5 14" stroke="#8A9AB0" stroke-width="1"/></g></svg>
<div class="t" style="left:35px;top:308px;color:#215DC6">Create Task</div>
<svg style="left:16px;top:328px;" width="16" height="16" viewBox="0 0 16 16"><rect x="0.5" y="1.5" width="12" height="14" fill="#F8FAFF" stroke="#7A8AA8" stroke-width="1"/><path d="M3 14.5L12.5 4L15 6.5L5.5 16L2.5 16.5Z" fill="#7A8AB0" stroke="#3A4A78" stroke-width="0.8"/><path d="M12.5 4L14 1.5L16.5 3.5L15 6.5Z" fill="#E0601A"/><path d="M2.5 16.5L3 14.5L4.5 16Z" fill="#307030"/></svg>
<div class="t" style="left:35px;top:330px;color:#4B7BD6">Edit Task</div>
<svg style="left:16px;top:350px;" width="16" height="16" viewBox="0 0 16 16"><path d="M5 8H14L13 16H6Z" fill="#A8D0F0" stroke="#5A88B8" stroke-width="0.8"/><ellipse cx="9.5" cy="8" rx="4.5" ry="1.5" fill="#D0E6F8" stroke="#5A88B8" stroke-width="0.8"/><path d="M0.5 3L3 0.5L5 2L4 4L2 5Z" fill="#8898B8"/><path d="M7 1Q11 0 12.5 4L14 3.5L13 8L10 6L11.5 5.5Q10.5 3 7.5 3Z" fill="#30A030"/></svg>
<div class="t" style="left:35px;top:352px;color:#4B7BD6">Delete Task(s)</div>
<svg style="left:16px;top:372px;" width="16" height="16" viewBox="0 0 16 16"><g transform="translate(1,1)"><defs><linearGradient id="g21" x1="0" y1="0" x2="0" y2="1"><stop offset="0" stop-color="#5A9AF8"/><stop offset="0.5" stop-color="#2A6AE8"/><stop offset="1" stop-color="#0A48C0"/></linearGradient></defs><rect x="0.5" y="0.5" width="13" height="13" rx="2" fill="url(#g21)" stroke="#0A3AA0" stroke-width="1"/><path d="M3.5 8.5L7 5L10.5 8.5" stroke="#fff" stroke-width="1.7" fill="none"/></g></svg>
<div class="t" style="left:35px;top:374px;color:#4B7BD6">Task Move Up</div>
<svg style="left:16px;top:394px;" width="16" height="16" viewBox="0 0 16 16"><g transform="translate(1,1)"><defs><linearGradient id="g22" x1="0" y1="0" x2="0" y2="1"><stop offset="0" stop-color="#5A9AF8"/><stop offset="0.5" stop-color="#2A6AE8"/><stop offset="1" stop-color="#0A48C0"/></linearGradient></defs><rect x="0.5" y="0.5" width="13" height="13" rx="2" fill="url(#g22)" stroke="#0A3AA0" stroke-width="1"/><path d="M3.5 5L7 8.5L10.5 5" stroke="#fff" stroke-width="1.7" fill="none"/></g></svg>
<div class="t" style="left:35px;top:396px;color:#4B7BD6">Task Move Down</div>
<svg style="left:16px;top:416px;" width="16" height="16" viewBox="0 0 16 16"><g transform="translate(1,1)"><defs><linearGradient id="g23" x1="0" y1="0" x2="0" y2="1"><stop offset="0" stop-color="#5A9AF8"/><stop offset="0.5" stop-color="#2A6AE8"/><stop offset="1" stop-color="#0A48C0"/></linearGradient></defs><rect x="0.5" y="0.5" width="13" height="13" rx="2" fill="url(#g23)" stroke="#0A3AA0" stroke-width="1"/><path d="M3.5 7L7 3.5L10.5 7M3.5 11L7 7.5L10.5 11" stroke="#fff" stroke-width="1.7" fill="none"/></g></svg>
<div class="t" style="left:35px;top:418px;color:#4B7BD6">Increase Priority</div>
<svg style="left:16px;top:438px;" width="16" height="16" viewBox="0 0 16 16"><g transform="translate(1,1)"><defs><linearGradient id="g24" x1="0" y1="0" x2="0" y2="1"><stop offset="0" stop-color="#5A9AF8"/><stop offset="0.5" stop-color="#2A6AE8"/><stop offset="1" stop-color="#0A48C0"/></linearGradient></defs><rect x="0.5" y="0.5" width="13" height="13" rx="2" fill="url(#g24)" stroke="#0A3AA0" stroke-width="1"/><path d="M3.5 3L7 6.5L10.5 3M3.5 7L7 10.5L10.5 7" stroke="#fff" stroke-width="1.7" fill="none"/></g></svg>
<div class="t" style="left:35px;top:440px;color:#4B7BD6">Decrease Priority</div>
<div class="a" style="left:12px;top:469px;width:161px;height:25px;background:linear-gradient(90deg,#FFFFFF 0,#FFFFFF 50%,#F4F7FE 55%,#DCE5F9 80%,#C6D3F7 82%,#C6D3F7 100%);border-radius:3px 3px 0 0"></div>
<svg style="left:12px;top:470px;" width="26" height="24" viewBox="0 0 26 24"><path d="M0.5 2.5H8L10 4.5H18V17H0.5Z" fill="#F8D880" stroke="#E89A30" stroke-width="1"/><path d="M0.5 8H17L18 17H0.5Z" fill="#FCE6A8" stroke="#E8A840" stroke-width="0.8"/><rect x="9.5" y="11.5" width="9" height="12" fill="#E8EEF8" stroke="#6A7A98" stroke-width="1"/><rect x="11" y="14" width="6" height="5" fill="#A8C4E4"/><ellipse cx="17.5" cy="11" rx="4" ry="2.8" fill="#D84A18"/></svg>
<div class="t" style="left:41px;top:477px;font-weight:bold;font-size:12px;line-height:13px;color:#215DC6">Category Operati...</div>
<svg style="left:152px;top:472px;" width="18" height="18" viewBox="0 0 18 18"><circle cx="9.2" cy="9.2" r="8.3" fill="#A8B4D0" opacity="0.55"/><circle cx="8.5" cy="8.5" r="7.6" fill="#fff" stroke="#C4CCDC" stroke-width="0.8"/><path d="M5.6 8.3L8.5 5.4L11.4 8.3M5.6 12L8.5 9.1L11.4 12" stroke="#1E3C96" stroke-width="1.5" fill="none"/></svg>
<div class="a" style="left:12px;top:494px;width:161px;height:206px;background:#D6DFF7;border:1px solid #fff;border-top:0"></div>
<svg style="left:16px;top:505px;" width="16" height="16" viewBox="0 0 16 16"><rect x="1.5" y="4.5" width="13" height="10" fill="#F4F8FF" stroke="#3A5A98" stroke-width="1"/><rect x="2" y="5" width="12" height="2" fill="#2A5AC8"/><path d="M12 0V6M9 3H15" stroke="#1A8A1A" stroke-width="2"/></svg>
<div class="t" style="left:35px;top:507px;color:#215DC6">New Category</div>
<svg style="left:16px;top:527px;" width="16" height="16" viewBox="0 0 16 16"><rect x="1.5" y="1.5" width="4" height="3" fill="#fff" stroke="#2A4A90"/><path d="M3.5 5V15M3.5 9H7M3.5 12H7M3.5 15H7" stroke="#2A4A90"/><rect x="7.5" y="7.5" width="5" height="2" fill="#fff" stroke="#2A4A90"/><rect x="7.5" y="11" width="5" height="2" fill="#fff" stroke="#2A4A90"/><rect x="7.5" y="14" width="5" height="2" fill="#fff" stroke="#2A4A90"/><path d="M13 0V5M10.5 2.5H15.5" stroke="#1A8A1A" stroke-width="1.8"/></svg>
<div class="t" style="left:35px;top:529px;color:#4B7BD6">Add Sub Category</div>
<svg style="left:16px;top:549px;" width="16" height="16" viewBox="0 0 16 16"><rect x="1.5" y="4.5" width="12" height="10" fill="#F4F8FF" stroke="#3A5A98" stroke-width="1"/><rect x="2" y="5" width="11" height="2" fill="#2A5AC8"/><path d="M3 9H8M3 11.5H7" stroke="#3A5A98" stroke-width="0.8"/><path d="M5 14L13 4L15 6L7 15.5L4.5 16Z" fill="#F0C040" stroke="#B07010" stroke-width="0.7"/><path d="M13 4L14.5 2L16 4L15 6Z" fill="#E04A18"/></svg>
<div class="t" style="left:35px;top:551px;color:#4B7BD6">Edit Category</div>
<svg style="left:16px;top:571px;" width="16" height="16" viewBox="0 0 16 16"><rect x="1.5" y="4.5" width="13" height="10" fill="#F4F8FF" stroke="#3A5A98" stroke-width="1"/><rect x="2" y="5" width="12" height="2" fill="#2A5AC8"/><path d="M8 9L14 16M14 9L8 16" stroke="#E04010" stroke-width="1.8"/></svg>
<div class="t" style="left:35px;top:573px;color:#4B7BD6">Delete Category</div>
<svg style="left:16px;top:593px;" width="16" height="16" viewBox="0 0 16 16"><rect x="1.5" y="4.5" width="13" height="10" fill="#F4F8FF" stroke="#3A5A98" stroke-width="1"/><path d="M2 5H14" stroke="#3A5A98" stroke-width="1.5" stroke-dasharray="1 1"/><path d="M8 7.5L11 10.5H9.2V13H6.8V10.5H5Z" fill="#2A5AC8"/></svg>
<div class="t" style="left:35px;top:595px;color:#4B7BD6">Category Move Up</div>
<svg style="left:16px;top:615px;" width="16" height="16" viewBox="0 0 16 16"><rect x="1.5" y="4.5" width="13" height="10" fill="#F4F8FF" stroke="#3A5A98" stroke-width="1"/><path d="M2 5H14" stroke="#3A5A98" stroke-width="1.5" stroke-dasharray="1 1"/><path d="M8 13.5L11 10.5H9.2V8H6.8V10.5H5Z" fill="#2A5AC8"/></svg>
<div class="t" style="left:35px;top:617px;color:#4B7BD6">Category Move Down</div>
<svg style="left:16px;top:637px;" width="16" height="16" viewBox="0 0 16 16"><path d="M3.5 1L6.5 5H5V15H2V5H0.5Z" fill="#2A5AC8"/><path d="M8 4H11M8 7H13M8 10H14M8 13H15" stroke="#2A8A2A" stroke-width="1.6"/></svg>
<div class="t" style="left:35px;top:639px;color:#4B7BD6">Sort Categories</div>
<div class="a" style="left:184px;top:85px;width:911px;height:563px;background:#fff"></div>
<div class="a" style="left:184px;top:87px;width:1px;height:561px;background:#CBC5B2"></div>
<div class="a" style="left:185px;top:86px;width:910px;height:600px;border:1px solid #7F9DB9;background:#fff"></div>
<div class="a" style="left:186px;top:87px;width:908px;height:35px;background:#ACA899"></div>
<div class="t" style="left:194px;top:99px;color:#F4F1E2;letter-spacing:-0.18px">Drag a column header here to group by that column</div>
<div class="a" style="left:186px;top:122px;width:908px;height:19px;background:linear-gradient(#EBEADB 0,#EBEADB 16px,#E0DDCD 16px,#E0DDCD 17px,#D5D1C1 17px,#D5D1C1 18px,#CAC6B6 18px)"></div>
<div class="t" style="left:189px;top:126px;letter-spacing:-0.2px">Done</div>
<div class="t" style="left:251px;top:126px;letter-spacing:-0.2px">Info</div>
<div class="t" style="left:392px;top:126px;letter-spacing:-0.2px">Name</div>
<div class="a" style="left:527px;top:126px;width:14px;height:11px;background:linear-gradient(#CADCFC,#AAC6F5);border-radius:2px"></div>
<svg style="left:530px;top:129px;" width="8" height="5" viewBox="0 0 8 5"><path d="M1 0.8L4 3.8L7 0.8" stroke="#34466E" stroke-width="2" fill="none"/></svg>
<div class="t" style="left:554px;top:126px;letter-spacing:-0.2px">Priority</div>
<div class="a" style="left:596px;top:126px;width:14px;height:11px;background:linear-gradient(#CADCFC,#AAC6F5);border-radius:2px"></div>
<svg style="left:599px;top:129px;" width="8" height="5" viewBox="0 0 8 5"><path d="M1 0.8L4 3.8L7 0.8" stroke="#34466E" stroke-width="2" fill="none"/></svg>
<div class="t" style="left:631px;top:126px;letter-spacing:-0.2px">Due Date&amp;Time</div>
<div class="t" style="left:732px;top:126px;letter-spacing:-0.2px">Left Time</div>
<div class="a" style="left:782px;top:126px;width:14px;height:11px;background:linear-gradient(#CADCFC,#AAC6F5);border-radius:2px"></div>
<svg style="left:785px;top:129px;" width="8" height="5" viewBox="0 0 8 5"><path d="M1 0.8L4 3.8L7 0.8" stroke="#34466E" stroke-width="2" fill="none"/></svg>
<div class="t" style="left:810px;top:126px;letter-spacing:-0.2px">Status</div>
<div class="a" style="left:851px;top:126px;width:14px;height:11px;background:linear-gradient(#CADCFC,#AAC6F5);border-radius:2px"></div>
<svg style="left:854px;top:129px;" width="8" height="5" viewBox="0 0 8 5"><path d="M1 0.8L4 3.8L7 0.8" stroke="#34466E" stroke-width="2" fill="none"/></svg>
<div class="t" style="left:875px;top:126px;letter-spacing:-0.2px">Complete</div>
<div class="t" style="left:958px;top:126px;letter-spacing:-0.2px">Category</div>
<div class="t" style="left:1033px;top:126px;width:42px;overflow:hidden;direction:rtl;text-align:left;letter-spacing:-0.1px">Hyperlink</div>
<div class="a" style="left:1077px;top:126px;width:14px;height:11px;background:linear-gradient(#CADCFC,#AAC6F5);border-radius:2px"></div>
<svg style="left:1080px;top:129px;" width="8" height="5" viewBox="0 0 8 5"><path d="M1 0.8L4 3.8L7 0.8" stroke="#34466E" stroke-width="2" fill="none"/></svg>
<div class="a" style="left:217px;top:125px;width:1px;height:12px;background:#C7C5B2"></div>
<div class="a" style="left:218px;top:125px;width:1px;height:12px;background:#FFFFFF"></div>
<div class="a" style="left:283px;top:125px;width:1px;height:12px;background:#C7C5B2"></div>
<div class="a" style="left:284px;top:125px;width:1px;height:12px;background:#FFFFFF"></div>
<div class="a" style="left:542px;top:125px;width:1px;height:12px;background:#C7C5B2"></div>
<div class="a" style="left:543px;top:125px;width:1px;height:12px;background:#FFFFFF"></div>
<div class="a" style="left:611px;top:125px;width:1px;height:12px;background:#C7C5B2"></div>
<div class="a" style="left:612px;top:125px;width:1px;height:12px;background:#FFFFFF"></div>
<div class="a" style="left:723px;top:125px;width:1px;height:12px;background:#C7C5B2"></div>
<div class="a" style="left:724px;top:125px;width:1px;height:12px;background:#FFFFFF"></div>
<div class="a" style="left:798px;top:125px;width:1px;height:12px;background:#C7C5B2"></div>
<div class="a" style="left:799px;top:125px;width:1px;height:12px;background:#FFFFFF"></div>
<div class="a" style="left:866px;top:125px;width:1px;height:12px;background:#C7C5B2"></div>
<div class="a" style="left:867px;top:125px;width:1px;height:12px;background:#FFFFFF"></div>
<div class="a" style="left:924px;top:125px;width:1px;height:12px;background:#C7C5B2"></div>
<div class="a" style="left:925px;top:125px;width:1px;height:12px;background:#FFFFFF"></div>
<div class="a" style="left:1030px;top:125px;width:1px;height:12px;background:#C7C5B2"></div>
<div class="a" style="left:1031px;top:125px;width:1px;height:12px;background:#FFFFFF"></div>
<div class="a" style="left:1092px;top:125px;width:1px;height:12px;background:#C7C5B2"></div>
<div class="a" style="left:1093px;top:125px;width:1px;height:12px;background:#FFFFFF"></div>
<svg style="left:222px;top:124px;" width="16" height="16" viewBox="0 0 16 16"><path d="M8 0.3L15.7 8L8 15.7L0.3 8Z" fill="#EAF0FC" stroke="#B8C8E8" stroke-width="0.8"/><path d="M8 2L14 8L8 14L2 8Z" fill="#1E5ADC"/><path d="M8 2L14 8L8 8L2 8Z" fill="#4A86F0" opacity="0.5"/><rect x="7" y="6.5" width="2" height="5" fill="#fff"/><rect x="7" y="4" width="2" height="1.8" fill="#fff"/></svg>
<div class="a" style="left:218px;top:141px;width:1px;height:21px;background:#ACA899"></div>
<div class="a" style="left:284px;top:141px;width:1px;height:21px;background:#ACA899"></div>
<div class="a" style="left:543px;top:141px;width:1px;height:21px;background:#ACA899"></div>
<div class="a" style="left:612px;top:141px;width:1px;height:21px;background:#ACA899"></div>
<div class="a" style="left:724px;top:141px;width:1px;height:21px;background:#ACA899"></div>
<div class="a" style="left:799px;top:141px;width:1px;height:21px;background:#ACA899"></div>
<div class="a" style="left:867px;top:141px;width:1px;height:21px;background:#ACA899"></div>
<div class="a" style="left:925px;top:141px;width:1px;height:21px;background:#ACA899"></div>
<div class="a" style="left:1031px;top:141px;width:1px;height:21px;background:#ACA899"></div>
<div class="a" style="left:1093px;top:141px;width:1px;height:21px;background:#ACA899"></div>
<div class="a" style="left:186px;top:162px;width:907px;height:1px;background:#ACA899"></div>
<div class="a" style="left:195px;top:145px;width:13px;height:13px;border:1px solid #1C5180;background:linear-gradient(135deg,#DCDCD7,#FBFBF9)"></div>
<div class="t" style="left:287px;top:144px;letter-spacing:-0.15px">Getting my thoughts together</div>
<svg style="left:547px;top:143px;" width="16" height="16" viewBox="0 0 16 16"><circle cx="8" cy="8" r="7.2" fill="#E8761E" stroke="#C85A10" stroke-width="0.8"/><circle cx="8" cy="8" r="3" fill="#fff" stroke="#E89050" stroke-width="0.6"/><path d="M2.5 7Q3.5 2.5 8 2" stroke="#F8C890" stroke-width="1.6" fill="none"/></svg>
<div class="t" style="left:567px;top:144px;letter-spacing:-0.15px">Normal</div>
<div class="t" style="left:613px;width:111px;text-align:center;top:144px;letter-spacing:-0.15px">31.10.2005 10:50:19</div>
<div class="t" style="left:725px;width:74px;text-align:center;top:146px;letter-spacing:-0.15px">2d 22h 15m</div>
<svg style="left:805px;top:143px;" width="13" height="16" viewBox="0 0 13 16"><defs><linearGradient id="g25" x1="0" y1="0" x2="1" y2="1"><stop offset="0" stop-color="#FFFFFF"/><stop offset="0.5" stop-color="#F0F6FF"/><stop offset="1" stop-color="#A8CCF4"/></linearGradient></defs><path d="M0.5 0.5H8.5L12.5 4.5V15.5H0.5Z" fill="url(#g25)" stroke="#7A9AC8" stroke-width="1"/><path d="M8.5 0.5V4.5H12.5Z" fill="#4A90F0" stroke="#5A80C0" stroke-width="0.8"/></svg>
<div class="t" style="left:823px;top:146px;letter-spacing:-0.15px">Created</div>
<div class="t" style="left:868px;width:57px;text-align:center;top:146px">0 %</div>
<svg style="left:929px;top:145px;" width="16" height="14" viewBox="0 0 16 14"><circle cx="5" cy="5" r="4" fill="#E8A858" stroke="#B88030" stroke-width="0.8"/><path d="M0 13.5V10.5Q0 8.5 2.5 8.5H8Q10 8.5 10 10.5V12.5H6V13.5Z" fill="#2A64E8"/><path d="M4.5 9V12" stroke="#fff" stroke-width="1"/><circle cx="11.5" cy="5" r="3.8" fill="#E87020" stroke="#101010" stroke-width="1.3"/><path d="M8 12.5V10.5Q8 8.5 10 8.5H14Q15.5 8.5 15.5 10.5V12.5Z" fill="#1EA01E"/></svg>
<div class="t" style="left:949px;top:144px;letter-spacing:-0.15px">New York Times</div>
<div class="a" style="left:218px;top:163px;width:1px;height:21px;background:#ACA899"></div>
<div class="a" style="left:284px;top:163px;width:1px;height:21px;background:#ACA899"></div>
<div class="a" style="left:543px;top:163px;width:1px;height:21px;background:#ACA899"></div>
<div class="a" style="left:612px;top:163px;width:1px;height:21px;background:#ACA899"></div>
<div class="a" style="left:724px;top:163px;width:1px;height:21px;background:#ACA899"></div>
<div class="a" style="left:799px;top:163px;width:1px;height:21px;background:#ACA899"></div>
<div class="a" style="left:867px;top:163px;width:1px;height:21px;background:#ACA899"></div>
<div class="a" style="left:925px;top:163px;width:1px;height:21px;background:#ACA899"></div>
<div class="a" style="left:1031px;top:163px;width:1px;height:21px;background:#ACA899"></div>
<div class="a" style="left:1093px;top:163px;width:1px;height:21px;background:#ACA899"></div>
<div class="a" style="left:186px;top:184px;width:907px;height:1px;background:#ACA899"></div>
<div class="a" style="left:195px;top:167px;width:13px;height:13px;border:1px solid #1C5180;background:linear-gradient(135deg,#DCDCD7,#FBFBF9)"></div>
<div class="t" style="left:287px;top:166px;letter-spacing:-0.15px">Searching for information about Ukraine in Google</div>
<svg style="left:547px;top:165px;" width="16" height="16" viewBox="0 0 16 16"><path d="M8 0.8L15.5 11.5H0.5Z" fill="#F8D050" stroke="#E8A830" stroke-width="0.8"/><path d="M0.5 11.5H15.5" stroke="#E05A10" stroke-width="1.4"/><rect x="7.2" y="3.5" width="1.8" height="5" fill="#3A6A5A"/><rect x="7.2" y="9.5" width="1.8" height="1.5" fill="#000"/></svg>
<div class="t" style="left:567px;top:166px;letter-spacing:-0.15px">Urgent</div>
<div class="t" style="left:613px;width:111px;text-align:center;top:166px;letter-spacing:-0.15px">29.10.2005 10:52:34</div>
<div class="t" style="left:725px;width:74px;text-align:center;top:168px;letter-spacing:-0.15px">22h 18m</div>
<svg style="left:805px;top:165px;" width="13" height="16" viewBox="0 0 13 16"><defs><linearGradient id="g26" x1="0" y1="0" x2="1" y2="1"><stop offset="0" stop-color="#FFFFFF"/><stop offset="0.5" stop-color="#F0F6FF"/><stop offset="1" stop-color="#A8CCF4"/></linearGradient></defs><path d="M0.5 0.5H8.5L12.5 4.5V15.5H0.5Z" fill="url(#g26)" stroke="#7A9AC8" stroke-width="1"/><path d="M8.5 0.5V4.5H12.5Z" fill="#4A90F0" stroke="#5A80C0" stroke-width="0.8"/></svg>
<div class="t" style="left:823px;top:168px;letter-spacing:-0.15px">Created</div>
<div class="t" style="left:868px;width:57px;text-align:center;top:168px">0 %</div>
<svg style="left:929px;top:167px;" width="16" height="14" viewBox="0 0 16 14"><circle cx="5" cy="5" r="4" fill="#E8A858" stroke="#B88030" stroke-width="0.8"/><path d="M0 13.5V10.5Q0 8.5 2.5 8.5H8Q10 8.5 10 10.5V12.5H6V13.5Z" fill="#2A64E8"/><path d="M4.5 9V12" stroke="#fff" stroke-width="1"/><circle cx="11.5" cy="5" r="3.8" fill="#E87020" stroke="#101010" stroke-width="1.3"/><path d="M8 12.5V10.5Q8 8.5 10 8.5H14Q15.5 8.5 15.5 10.5V12.5Z" fill="#1EA01E"/></svg>
<div class="t" style="left:949px;top:166px;letter-spacing:-0.15px">New York Times</div>
<div class="a" style="left:218px;top:185px;width:1px;height:21px;background:#ACA899"></div>
<div class="a" style="left:284px;top:185px;width:1px;height:21px;background:#ACA899"></div>
<div class="a" style="left:543px;top:185px;width:1px;height:21px;background:#ACA899"></div>
<div class="a" style="left:612px;top:185px;width:1px;height:21px;background:#ACA899"></div>
<div class="a" style="left:724px;top:185px;width:1px;height:21px;background:#ACA899"></div>
<div class="a" style="left:799px;top:185px;width:1px;height:21px;background:#ACA899"></div>
<div class="a" style="left:867px;top:185px;width:1px;height:21px;background:#ACA899"></div>
<div class="a" style="left:925px;top:185px;width:1px;height:21px;background:#ACA899"></div>
<div class="a" style="left:1031px;top:185px;width:1px;height:21px;background:#ACA899"></div>
<div class="a" style="left:1093px;top:185px;width:1px;height:21px;background:#ACA899"></div>
<div class="a" style="left:186px;top:206px;width:907px;height:1px;background:#ACA899"></div>
<div class="a" style="left:195px;top:189px;width:13px;height:13px;border:1px solid #1C5180;background:linear-gradient(135deg,#DCDCD7,#FBFBF9)"></div>
<div class="t" style="left:287px;top:188px;letter-spacing:-0.15px">Writing article about Ukraine</div>
<svg style="left:547px;top:187px;" width="16" height="16" viewBox="0 0 16 16"><circle cx="8" cy="8" r="7.2" fill="#E8761E" stroke="#C85A10" stroke-width="0.8"/><circle cx="8" cy="8" r="3" fill="#fff" stroke="#E89050" stroke-width="0.6"/><path d="M2.5 7Q3.5 2.5 8 2" stroke="#F8C890" stroke-width="1.6" fill="none"/></svg>
<div class="t" style="left:567px;top:188px;letter-spacing:-0.15px">Normal</div>
<div class="t" style="left:613px;width:111px;text-align:center;top:188px;letter-spacing:-0.15px">05.11.2005 10:54:38</div>
<div class="t" style="left:725px;width:74px;text-align:center;top:190px;letter-spacing:-0.15px">7d 22h 20m</div>
<svg style="left:805px;top:187px;" width="13" height="16" viewBox="0 0 13 16"><defs><linearGradient id="g27" x1="0" y1="0" x2="1" y2="1"><stop offset="0" stop-color="#FFFFFF"/><stop offset="0.5" stop-color="#F0F6FF"/><stop offset="1" stop-color="#A8CCF4"/></linearGradient></defs><path d="M0.5 0.5H8.5L12.5 4.5V15.5H0.5Z" fill="url(#g27)" stroke="#7A9AC8" stroke-width="1"/><path d="M8.5 0.5V4.5H12.5Z" fill="#4A90F0" stroke="#5A80C0" stroke-width="0.8"/></svg>
<div class="t" style="left:823px;top:190px;letter-spacing:-0.15px">Created</div>
<div class="t" style="left:868px;width:57px;text-align:center;top:190px">0 %</div>
<svg style="left:929px;top:189px;" width="16" height="14" viewBox="0 0 16 14"><circle cx="5" cy="5" r="4" fill="#E8A858" stroke="#B88030" stroke-width="0.8"/><path d="M0 13.5V10.5Q0 8.5 2.5 8.5H8Q10 8.5 10 10.5V12.5H6V13.5Z" fill="#2A64E8"/><path d="M4.5 9V12" stroke="#fff" stroke-width="1"/><circle cx="11.5" cy="5" r="3.8" fill="#E87020" stroke="#101010" stroke-width="1.3"/><path d="M8 12.5V10.5Q8 8.5 10 8.5H14Q15.5 8.5 15.5 10.5V12.5Z" fill="#1EA01E"/></svg>
<div class="t" style="left:949px;top:188px;letter-spacing:-0.15px">New York Times</div>
<svg style="left:220px;top:187px;" width="16" height="16" viewBox="0 0 16 16"><rect x="0.5" y="1.5" width="11" height="10" fill="#F4F8FF" stroke="#5A70A0"/><path d="M2 5H8M2 7H8" stroke="#6A9AE0" stroke-width="0.8"/><path d="M4.5 3.5H12.5L15.5 6.5V15.5H4.5Z" fill="#FBEAA8" stroke="#E8861C" stroke-width="1"/><path d="M7 9V1.5Q7 0 8.5 0Q10 0 10 1.5V10" stroke="#1E50D0" stroke-width="1.3" fill="none"/></svg>
<div class="t" style="left:1034px;top:187px;width:58px;overflow:hidden;color:#0000FF;text-decoration:underline">C:\Documents and Settings</div>
<div class="a" style="left:218px;top:207px;width:1px;height:21px;background:#ACA899"></div>
<div class="a" style="left:284px;top:207px;width:1px;height:21px;background:#ACA899"></div>
<div class="a" style="left:543px;top:207px;width:1px;height:21px;background:#ACA899"></div>
<div class="a" style="left:612px;top:207px;width:1px;height:21px;background:#ACA899"></div>
<div class="a" style="left:724px;top:207px;width:1px;height:21px;background:#ACA899"></div>
<div class="a" style="left:799px;top:207px;width:1px;height:21px;background:#ACA899"></div>
<div class="a" style="left:867px;top:207px;width:1px;height:21px;background:#ACA899"></div>
<div class="a" style="left:925px;top:207px;width:1px;height:21px;background:#ACA899"></div>
<div class="a" style="left:1031px;top:207px;width:1px;height:21px;background:#ACA899"></div>
<div class="a" style="left:1093px;top:207px;width:1px;height:21px;background:#ACA899"></div>
<div class="a" style="left:186px;top:228px;width:907px;height:1px;background:#ACA899"></div>
<div class="a" style="left:195px;top:211px;width:13px;height:13px;border:1px solid #1C5180;background:linear-gradient(135deg,#DCDCD7,#FBFBF9)"></div>
<div class="t" style="left:287px;top:210px;letter-spacing:-0.15px">Trying Ukrainian food</div>
<svg style="left:547px;top:209px;" width="16" height="16" viewBox="0 0 16 16"><g transform="translate(0,1)"><rect x="1" y="0" width="14" height="14" rx="1.5" fill="#2EA82E" stroke="#1A8A1A" stroke-width="0.8"/><path d="M2 1H8L2 7Z" fill="#90E090" opacity="0.6"/><path d="M4 5L8 9L12 5" stroke="#fff" stroke-width="2.4" fill="none"/></g></svg>
<div class="t" style="left:567px;top:210px;letter-spacing:-0.15px">Low</div>
<div class="t" style="left:613px;width:111px;text-align:center;top:210px;letter-spacing:-0.15px">30.10.2005 11:05:55</div>
<div class="t" style="left:725px;width:74px;text-align:center;top:212px;letter-spacing:-0.15px">1d 22h 31m</div>
<svg style="left:805px;top:209px;" width="13" height="16" viewBox="0 0 13 16"><defs><linearGradient id="g28" x1="0" y1="0" x2="1" y2="1"><stop offset="0" stop-color="#FFFFFF"/><stop offset="0.5" stop-color="#F0F6FF"/><stop offset="1" stop-color="#A8CCF4"/></linearGradient></defs><path d="M0.5 0.5H8.5L12.5 4.5V15.5H0.5Z" fill="url(#g28)" stroke="#7A9AC8" stroke-width="1"/><path d="M8.5 0.5V4.5H12.5Z" fill="#4A90F0" stroke="#5A80C0" stroke-width="0.8"/></svg>
<div class="t" style="left:823px;top:212px;letter-spacing:-0.15px">Created</div>
<div class="t" style="left:868px;width:57px;text-align:center;top:212px">0 %</div>
<svg style="left:929px;top:211px;" width="16" height="14" viewBox="0 0 16 14"><circle cx="5" cy="5" r="4" fill="#E8A858" stroke="#B88030" stroke-width="0.8"/><path d="M0 13.5V10.5Q0 8.5 2.5 8.5H8Q10 8.5 10 10.5V12.5H6V13.5Z" fill="#2A64E8"/><path d="M4.5 9V12" stroke="#fff" stroke-width="1"/><circle cx="11.5" cy="5" r="3.8" fill="#E87020" stroke="#101010" stroke-width="1.3"/><path d="M8 12.5V10.5Q8 8.5 10 8.5H14Q15.5 8.5 15.5 10.5V12.5Z" fill="#1EA01E"/></svg>
<div class="t" style="left:949px;top:210px;letter-spacing:-0.15px">New York Times</div>
<div class="a" style="left:218px;top:229px;width:1px;height:22px;background:#ACA899"></div>
<div class="a" style="left:284px;top:229px;width:1px;height:22px;background:#ACA899"></div>
<div class="a" style="left:543px;top:229px;width:1px;height:22px;background:#ACA899"></div>
<div class="a" style="left:612px;top:229px;width:1px;height:22px;background:#ACA899"></div>
<div class="a" style="left:724px;top:229px;width:1px;height:22px;background:#ACA899"></div>
<div class="a" style="left:799px;top:229px;width:1px;height:22px;background:#ACA899"></div>
<div class="a" style="left:867px;top:229px;width:1px;height:22px;background:#ACA899"></div>
<div class="a" style="left:925px;top:229px;width:1px;height:22px;background:#ACA899"></div>
<div class="a" style="left:1031px;top:229px;width:1px;height:22px;background:#ACA899"></div>
<div class="a" style="left:1093px;top:229px;width:1px;height:22px;background:#ACA899"></div>
<div class="a" style="left:186px;top:250px;width:907px;height:1px;background:#ACA899"></div>
<div class="a" style="left:195px;top:233px;width:13px;height:13px;border:1px solid #1C5180;background:linear-gradient(135deg,#DCDCD7,#FBFBF9)"></div>
<div class="t" style="left:287px;top:232px;letter-spacing:-0.15px">Applying to editor for a raise</div>
<svg style="left:547px;top:231px;" width="16" height="16" viewBox="0 0 16 16"><g transform="translate(0,1)"><rect x="1" y="0" width="14" height="14" rx="1.5" fill="#D84A14" stroke="#A83A10" stroke-width="0.8"/><path d="M2 1H8L2 7Z" fill="#F8B060" opacity="0.6"/><path d="M4 9L8 5L12 9" stroke="#fff" stroke-width="2.4" fill="none"/></g></svg>
<div class="t" style="left:567px;top:232px;letter-spacing:-0.15px">High</div>
<div class="t" style="left:613px;width:111px;text-align:center;top:232px;letter-spacing:-0.15px">02.11.2005 11:07:35</div>
<div class="t" style="left:725px;width:74px;text-align:center;top:234px;letter-spacing:-0.15px">4d 22h 33m</div>
<svg style="left:805px;top:231px;" width="13" height="16" viewBox="0 0 13 16"><defs><linearGradient id="g29" x1="0" y1="0" x2="1" y2="1"><stop offset="0" stop-color="#FFFFFF"/><stop offset="0.5" stop-color="#F0F6FF"/><stop offset="1" stop-color="#A8CCF4"/></linearGradient></defs><path d="M0.5 0.5H8.5L12.5 4.5V15.5H0.5Z" fill="url(#g29)" stroke="#7A9AC8" stroke-width="1"/><path d="M8.5 0.5V4.5H12.5Z" fill="#4A90F0" stroke="#5A80C0" stroke-width="0.8"/></svg>
<div class="t" style="left:823px;top:234px;letter-spacing:-0.15px">Created</div>
<div class="t" style="left:868px;width:57px;text-align:center;top:234px">0 %</div>
<svg style="left:929px;top:233px;" width="16" height="14" viewBox="0 0 16 14"><circle cx="5" cy="5" r="4" fill="#E8A858" stroke="#B88030" stroke-width="0.8"/><path d="M0 13.5V10.5Q0 8.5 2.5 8.5H8Q10 8.5 10 10.5V12.5H6V13.5Z" fill="#2A64E8"/><path d="M4.5 9V12" stroke="#fff" stroke-width="1"/><circle cx="11.5" cy="5" r="3.8" fill="#E87020" stroke="#101010" stroke-width="1.3"/><path d="M8 12.5V10.5Q8 8.5 10 8.5H14Q15.5 8.5 15.5 10.5V12.5Z" fill="#1EA01E"/></svg>
<div class="t" style="left:949px;top:232px;letter-spacing:-0.15px">New York Times</div>
<svg style="left:268px;top:232px;" width="16" height="16" viewBox="0 0 16 16"><g transform="scale(0.64)"><path d="M1.5 21L4 4L10.5 15L18.5 13V20L5 21.5Z" fill="#F4F6FA" stroke="#B8C4D8" stroke-width="0.8"/><path d="M9 16H18M6 19H17" stroke="#7AA0D8" stroke-width="1"/><path d="M11 14.5L19 13V20L9 21Z" fill="#C8DCF4" opacity="0.8"/><path d="M3.5 2L13.5 1L24 12L10.5 15.5Z" fill="#2EA02E" stroke="#0E6A0E" stroke-width="1"/><path d="M6 3.5L13 2.5L19 9L10 11Z" fill="#58C858" opacity="0.75"/><path d="M3.5 2L0.5 21.5L2 21.5L4.5 5Z" fill="#1E8A1E" stroke="#0E5A0E" stroke-width="0.8"/><path d="M5 0.5V2.5M7 0.5V2.5M9 0.3V2.3M11 0.2V2.2" stroke="#2040A0" stroke-width="0.8"/></g></svg>
<div class="t" style="left:208px;top:254px;color:#0000FF;letter-spacing:-0.15px">Not to forget to Export this To Do List to Excel and send it to editor showing him</div>
<div class="t" style="left:208px;top:267px;color:#0000FF;letter-spacing:-0.15px">how much I work.</div>
<div class="a" style="left:186px;top:282px;width:907px;height:1px;background:#ACA899"></div>
<div class="a" style="left:218px;top:283px;width:1px;height:21px;background:#ACA899"></div>
<div class="a" style="left:284px;top:283px;width:1px;height:21px;background:#ACA899"></div>
<div class="a" style="left:543px;top:283px;width:1px;height:21px;background:#ACA899"></div>
<div class="a" style="left:612px;top:283px;width:1px;height:21px;background:#ACA899"></div>
<div class="a" style="left:724px;top:283px;width:1px;height:21px;background:#ACA899"></div>
<div class="a" style="left:799px;top:283px;width:1px;height:21px;background:#ACA899"></div>
<div class="a" style="left:867px;top:283px;width:1px;height:21px;background:#ACA899"></div>
<div class="a" style="left:925px;top:283px;width:1px;height:21px;background:#ACA899"></div>
<div class="a" style="left:1031px;top:283px;width:1px;height:21px;background:#ACA899"></div>
<div class="a" style="left:1093px;top:283px;width:1px;height:21px;background:#ACA899"></div>
<div class="a" style="left:186px;top:304px;width:907px;height:1px;background:#ACA899"></div>
<div class="a" style="left:195px;top:287px;width:13px;height:13px;border:1px solid #1C5180;background:linear-gradient(135deg,#DCDCD7,#FBFBF9)"></div>
<div class="t" style="left:287px;top:286px;letter-spacing:-0.15px">Sending article to editor</div>
<svg style="left:547px;top:285px;" width="16" height="16" viewBox="0 0 16 16"><circle cx="8" cy="8" r="7.2" fill="#E8761E" stroke="#C85A10" stroke-width="0.8"/><circle cx="8" cy="8" r="3" fill="#fff" stroke="#E89050" stroke-width="0.6"/><path d="M2.5 7Q3.5 2.5 8 2" stroke="#F8C890" stroke-width="1.6" fill="none"/></svg>
<div class="t" style="left:567px;top:286px;letter-spacing:-0.15px">Normal</div>
<div class="t" style="left:613px;width:111px;text-align:center;top:286px;letter-spacing:-0.15px">06.11.2005 11:08:08</div>
<div class="t" style="left:725px;width:74px;text-align:center;top:288px;letter-spacing:-0.15px">8d 22h 33m</div>
<svg style="left:805px;top:285px;" width="13" height="16" viewBox="0 0 13 16"><defs><linearGradient id="g30" x1="0" y1="0" x2="1" y2="1"><stop offset="0" stop-color="#FFFFFF"/><stop offset="0.5" stop-color="#F0F6FF"/><stop offset="1" stop-color="#A8CCF4"/></linearGradient></defs><path d="M0.5 0.5H8.5L12.5 4.5V15.5H0.5Z" fill="url(#g30)" stroke="#7A9AC8" stroke-width="1"/><path d="M8.5 0.5V4.5H12.5Z" fill="#4A90F0" stroke="#5A80C0" stroke-width="0.8"/></svg>
<div class="t" style="left:823px;top:288px;letter-spacing:-0.15px">Created</div>
<div class="t" style="left:868px;width:57px;text-align:center;top:288px">0 %</div>
<svg style="left:929px;top:287px;" width="16" height="14" viewBox="0 0 16 14"><circle cx="5" cy="5" r="4" fill="#E8A858" stroke="#B88030" stroke-width="0.8"/><path d="M0 13.5V10.5Q0 8.5 2.5 8.5H8Q10 8.5 10 10.5V12.5H6V13.5Z" fill="#2A64E8"/><path d="M4.5 9V12" stroke="#fff" stroke-width="1"/><circle cx="11.5" cy="5" r="3.8" fill="#E87020" stroke="#101010" stroke-width="1.3"/><path d="M8 12.5V10.5Q8 8.5 10 8.5H14Q15.5 8.5 15.5 10.5V12.5Z" fill="#1EA01E"/></svg>
<div class="t" style="left:949px;top:286px;letter-spacing:-0.15px">New York Times</div>
<div class="a" style="left:218px;top:305px;width:1px;height:21px;background:#ACA899"></div>
<div class="a" style="left:284px;top:305px;width:1px;height:21px;background:#ACA899"></div>
<div class="a" style="left:543px;top:305px;width:1px;height:21px;background:#ACA899"></div>
<div class="a" style="left:612px;top:305px;width:1px;height:21px;background:#ACA899"></div>
<div class="a" style="left:724px;top:305px;width:1px;height:21px;background:#ACA899"></div>
<div class="a" style="left:799px;top:305px;width:1px;height:21px;background:#ACA899"></div>
<div class="a" style="left:867px;top:305px;width:1px;height:21px;background:#ACA899"></div>
<div class="a" style="left:925px;top:305px;width:1px;height:21px;background:#ACA899"></div>
<div class="a" style="left:1031px;top:305px;width:1px;height:21px;background:#ACA899"></div>
<div class="a" style="left:1093px;top:305px;width:1px;height:21px;background:#ACA899"></div>
<div class="a" style="left:186px;top:326px;width:907px;height:1px;background:#ACA899"></div>
<div class="a" style="left:195px;top:309px;width:13px;height:13px;border:1px solid #1C5180;background:linear-gradient(135deg,#DCDCD7,#FBFBF9)"></div>
<div class="t" style="left:287px;top:308px;letter-spacing:-0.15px">Trying Ukrainian vodka</div>
<svg style="left:547px;top:307px;" width="16" height="16" viewBox="0 0 16 16"><g transform="translate(0,1)"><rect x="1" y="0" width="14" height="14" rx="1.5" fill="#D84A14" stroke="#A83A10" stroke-width="0.8"/><path d="M2 1H8L2 7Z" fill="#F8B060" opacity="0.6"/><path d="M4.5 7L8 3.5L11.5 7M4.5 11.5L8 8L11.5 11.5" stroke="#fff" stroke-width="1.8" fill="none"/></g></svg>
<div class="t" style="left:567px;top:308px;letter-spacing:-0.15px">Highest</div>
<div class="t" style="left:613px;width:111px;text-align:center;top:308px;letter-spacing:-0.15px">30.10.2005 11:09:37</div>
<div class="t" style="left:725px;width:74px;text-align:center;top:310px;letter-spacing:-0.15px">1d 22h 35m</div>
<svg style="left:805px;top:307px;" width="13" height="16" viewBox="0 0 13 16"><defs><linearGradient id="g31" x1="0" y1="0" x2="1" y2="1"><stop offset="0" stop-color="#FFFFFF"/><stop offset="0.5" stop-color="#F0F6FF"/><stop offset="1" stop-color="#A8CCF4"/></linearGradient></defs><path d="M0.5 0.5H8.5L12.5 4.5V15.5H0.5Z" fill="url(#g31)" stroke="#7A9AC8" stroke-width="1"/><path d="M8.5 0.5V4.5H12.5Z" fill="#4A90F0" stroke="#5A80C0" stroke-width="0.8"/></svg>
<div class="t" style="left:823px;top:310px;letter-spacing:-0.15px">Created</div>
<div class="t" style="left:868px;width:57px;text-align:center;top:310px">0 %</div>
<svg style="left:929px;top:309px;" width="16" height="14" viewBox="0 0 16 14"><circle cx="5" cy="5" r="4" fill="#E8A858" stroke="#B88030" stroke-width="0.8"/><path d="M0 13.5V10.5Q0 8.5 2.5 8.5H8Q10 8.5 10 10.5V12.5H6V13.5Z" fill="#2A64E8"/><path d="M4.5 9V12" stroke="#fff" stroke-width="1"/><circle cx="11.5" cy="5" r="3.8" fill="#E87020" stroke="#101010" stroke-width="1.3"/><path d="M8 12.5V10.5Q8 8.5 10 8.5H14Q15.5 8.5 15.5 10.5V12.5Z" fill="#1EA01E"/></svg>
<div class="t" style="left:949px;top:308px;letter-spacing:-0.15px">New York Times</div>
<svg style="left:251px;top:306px;" width="18" height="18" viewBox="0 0 18 18"><rect x="7.8" y="2" width="2.6" height="3.5" fill="#E8801A"/><circle cx="9.1" cy="3.2" r="0.6" fill="#fff"/><path d="M4 15.5L5.3 13.5V10Q5.3 5.8 9.1 5.8Q13 5.8 13 10V13.5L14.5 15.5Z" fill="#F4C838" stroke="#D88018" stroke-width="0.8"/><path d="M10 6.5Q12.5 8 12.5 11V14L14 15.3H10Z" fill="#EE9A2A" opacity="0.8"/><path d="M6.5 9Q7 7 8.5 7" stroke="#FFF4C0" stroke-width="1.2" fill="none"/><circle cx="9.1" cy="16.3" r="1.2" fill="#C85010"/><path d="M4 2L6 4M13 4L15 2M1 5.5H5M14 5.5H18M2 9.5L5 7M14 7L17 9.5" stroke="#2F6A2F" stroke-width="1.1" stroke-dasharray="1.2 0.6"/></svg>
<div class="a" style="left:218px;top:327px;width:1px;height:21px;background:#ACA899"></div>
<div class="a" style="left:284px;top:327px;width:1px;height:21px;background:#ACA899"></div>
<div class="a" style="left:543px;top:327px;width:1px;height:21px;background:#ACA899"></div>
<div class="a" style="left:612px;top:327px;width:1px;height:21px;background:#ACA899"></div>
<div class="a" style="left:724px;top:327px;width:1px;height:21px;background:#ACA899"></div>
<div class="a" style="left:799px;top:327px;width:1px;height:21px;background:#ACA899"></div>
<div class="a" style="left:867px;top:327px;width:1px;height:21px;background:#ACA899"></div>
<div class="a" style="left:925px;top:327px;width:1px;height:21px;background:#ACA899"></div>
<div class="a" style="left:1031px;top:327px;width:1px;height:21px;background:#ACA899"></div>
<div class="a" style="left:1093px;top:327px;width:1px;height:21px;background:#ACA899"></div>
<div class="a" style="left:186px;top:348px;width:907px;height:1px;background:#ACA899"></div>
<div class="a" style="left:195px;top:331px;width:13px;height:13px;border:1px solid #1C5180;background:linear-gradient(135deg,#DCDCD7,#FBFBF9)"></div>
<div class="t" style="left:287px;top:330px;letter-spacing:-0.15px">Looking for Ukrainians living here</div>
<svg style="left:547px;top:329px;" width="16" height="16" viewBox="0 0 16 16"><circle cx="8" cy="8" r="7.2" fill="#E8761E" stroke="#C85A10" stroke-width="0.8"/><circle cx="8" cy="8" r="3" fill="#fff" stroke="#E89050" stroke-width="0.6"/><path d="M2.5 7Q3.5 2.5 8 2" stroke="#F8C890" stroke-width="1.6" fill="none"/></svg>
<div class="t" style="left:567px;top:330px;letter-spacing:-0.15px">Normal</div>
<div class="t" style="left:613px;width:111px;text-align:center;top:330px;letter-spacing:-0.15px">31.10.2005 11:16:02</div>
<div class="t" style="left:725px;width:74px;text-align:center;top:332px;letter-spacing:-0.15px">2d 22h 41m</div>
<svg style="left:805px;top:329px;" width="13" height="16" viewBox="0 0 13 16"><defs><linearGradient id="g32" x1="0" y1="0" x2="1" y2="1"><stop offset="0" stop-color="#FFFFFF"/><stop offset="0.5" stop-color="#F0F6FF"/><stop offset="1" stop-color="#A8CCF4"/></linearGradient></defs><path d="M0.5 0.5H8.5L12.5 4.5V15.5H0.5Z" fill="url(#g32)" stroke="#7A9AC8" stroke-width="1"/><path d="M8.5 0.5V4.5H12.5Z" fill="#4A90F0" stroke="#5A80C0" stroke-width="0.8"/></svg>
<div class="t" style="left:823px;top:332px;letter-spacing:-0.15px">Created</div>
<div class="t" style="left:868px;width:57px;text-align:center;top:332px">0 %</div>
<svg style="left:929px;top:331px;" width="16" height="14" viewBox="0 0 16 14"><circle cx="5" cy="5" r="4" fill="#E8A858" stroke="#B88030" stroke-width="0.8"/><path d="M0 13.5V10.5Q0 8.5 2.5 8.5H8Q10 8.5 10 10.5V12.5H6V13.5Z" fill="#2A64E8"/><path d="M4.5 9V12" stroke="#fff" stroke-width="1"/><circle cx="11.5" cy="5" r="3.8" fill="#E87020" stroke="#101010" stroke-width="1.3"/><path d="M8 12.5V10.5Q8 8.5 10 8.5H14Q15.5 8.5 15.5 10.5V12.5Z" fill="#1EA01E"/></svg>
<div class="t" style="left:949px;top:330px;letter-spacing:-0.15px">New York Times</div>
<div class="a" style="left:218px;top:349px;width:1px;height:21px;background:#ACA899"></div>
<div class="a" style="left:284px;top:349px;width:1px;height:21px;background:#ACA899"></div>
<div class="a" style="left:543px;top:349px;width:1px;height:21px;background:#ACA899"></div>
<div class="a" style="left:612px;top:349px;width:1px;height:21px;background:#ACA899"></div>
<div class="a" style="left:724px;top:349px;width:1px;height:21px;background:#ACA899"></div>
<div class="a" style="left:799px;top:349px;width:1px;height:21px;background:#ACA899"></div>
<div class="a" style="left:867px;top:349px;width:1px;height:21px;background:#ACA899"></div>
<div class="a" style="left:925px;top:349px;width:1px;height:21px;background:#ACA899"></div>
<div class="a" style="left:1031px;top:349px;width:1px;height:21px;background:#ACA899"></div>
<div class="a" style="left:1093px;top:349px;width:1px;height:21px;background:#ACA899"></div>
<div class="a" style="left:186px;top:370px;width:907px;height:1px;background:#ACA899"></div>
<div class="a" style="left:195px;top:353px;width:13px;height:13px;border:1px solid #1C5180;background:linear-gradient(135deg,#DCDCD7,#FBFBF9)"></div>
<div class="t" style="left:287px;top:352px;letter-spacing:-0.15px">Buying a book about Ukraine</div>
<svg style="left:547px;top:351px;" width="16" height="16" viewBox="0 0 16 16"><g transform="translate(0,1)"><rect x="1" y="0" width="14" height="14" rx="1.5" fill="#2EA82E" stroke="#1A8A1A" stroke-width="0.8"/><path d="M2 1H8L2 7Z" fill="#90E090" opacity="0.6"/><path d="M4.5 2.5L8 6L11.5 2.5M4.5 7L8 10.5L11.5 7" stroke="#fff" stroke-width="1.8" fill="none"/></g></svg>
<div class="t" style="left:567px;top:352px;letter-spacing:-0.15px">Lowest</div>
<div class="t" style="left:613px;width:111px;text-align:center;top:352px;letter-spacing:-0.15px">31.10.2005 11:19:15</div>
<div class="t" style="left:725px;width:74px;text-align:center;top:354px;letter-spacing:-0.15px">2d 22h 44m</div>
<svg style="left:805px;top:351px;" width="13" height="16" viewBox="0 0 13 16"><defs><linearGradient id="g33" x1="0" y1="0" x2="1" y2="1"><stop offset="0" stop-color="#FFFFFF"/><stop offset="0.5" stop-color="#F0F6FF"/><stop offset="1" stop-color="#A8CCF4"/></linearGradient></defs><path d="M0.5 0.5H8.5L12.5 4.5V15.5H0.5Z" fill="url(#g33)" stroke="#7A9AC8" stroke-width="1"/><path d="M8.5 0.5V4.5H12.5Z" fill="#4A90F0" stroke="#5A80C0" stroke-width="0.8"/></svg>
<div class="t" style="left:823px;top:354px;letter-spacing:-0.15px">Created</div>
<div class="t" style="left:868px;width:57px;text-align:center;top:354px">0 %</div>
<svg style="left:929px;top:353px;" width="16" height="14" viewBox="0 0 16 14"><circle cx="5" cy="5" r="4" fill="#E8A858" stroke="#B88030" stroke-width="0.8"/><path d="M0 13.5V10.5Q0 8.5 2.5 8.5H8Q10 8.5 10 10.5V12.5H6V13.5Z" fill="#2A64E8"/><path d="M4.5 9V12" stroke="#fff" stroke-width="1"/><circle cx="11.5" cy="5" r="3.8" fill="#E87020" stroke="#101010" stroke-width="1.3"/><path d="M8 12.5V10.5Q8 8.5 10 8.5H14Q15.5 8.5 15.5 10.5V12.5Z" fill="#1EA01E"/></svg>
<div class="t" style="left:949px;top:352px;letter-spacing:-0.15px">New York Times</div>
<div class="a" style="left:218px;top:371px;width:1px;height:21px;background:#ACA899"></div>
<div class="a" style="left:284px;top:371px;width:1px;height:21px;background:#ACA899"></div>
<div class="a" style="left:543px;top:371px;width:1px;height:21px;background:#ACA899"></div>
<div class="a" style="left:612px;top:371px;width:1px;height:21px;background:#ACA899"></div>
<div class="a" style="left:724px;top:371px;width:1px;height:21px;background:#ACA899"></div>
<div class="a" style="left:799px;top:371px;width:1px;height:21px;background:#ACA899"></div>
<div class="a" style="left:867px;top:371px;width:1px;height:21px;background:#ACA899"></div>
<div class="a" style="left:925px;top:371px;width:1px;height:21px;background:#ACA899"></div>
<div class="a" style="left:1031px;top:371px;width:1px;height:21px;background:#ACA899"></div>
<div class="a" style="left:1093px;top:371px;width:1px;height:21px;background:#ACA899"></div>
<div class="a" style="left:186px;top:392px;width:907px;height:1px;background:#ACA899"></div>
<div class="a" style="left:195px;top:375px;width:13px;height:13px;border:1px solid #1C5180;background:linear-gradient(135deg,#DCDCD7,#FBFBF9)"></div>
<div class="t" style="left:287px;top:374px;letter-spacing:-0.15px">Find Ukrainian Website in English</div>
<svg style="left:547px;top:373px;" width="16" height="16" viewBox="0 0 16 16"><path d="M8 0.8L15.5 11.5H0.5Z" fill="#F8D050" stroke="#E8A830" stroke-width="0.8"/><path d="M0.5 11.5H15.5" stroke="#E05A10" stroke-width="1.4"/><rect x="7.2" y="3.5" width="1.8" height="5" fill="#3A6A5A"/><rect x="7.2" y="9.5" width="1.8" height="1.5" fill="#000"/></svg>
<div class="t" style="left:567px;top:374px;letter-spacing:-0.15px">Urgent</div>
<div class="t" style="left:613px;width:111px;text-align:center;top:374px;letter-spacing:-0.15px">29.10.2005 11:20:33</div>
<div class="t" style="left:725px;width:74px;text-align:center;top:376px;letter-spacing:-0.15px">22h 46m</div>
<svg style="left:805px;top:373px;" width="13" height="16" viewBox="0 0 13 16"><defs><linearGradient id="g34" x1="0" y1="0" x2="1" y2="1"><stop offset="0" stop-color="#FFFFFF"/><stop offset="0.5" stop-color="#F0F6FF"/><stop offset="1" stop-color="#A8CCF4"/></linearGradient></defs><path d="M0.5 0.5H8.5L12.5 4.5V15.5H0.5Z" fill="url(#g34)" stroke="#7A9AC8" stroke-width="1"/><path d="M8.5 0.5V4.5H12.5Z" fill="#4A90F0" stroke="#5A80C0" stroke-width="0.8"/></svg>
<div class="t" style="left:823px;top:376px;letter-spacing:-0.15px">Created</div>
<div class="t" style="left:868px;width:57px;text-align:center;top:376px">0 %</div>
<svg style="left:929px;top:375px;" width="16" height="14" viewBox="0 0 16 14"><circle cx="5" cy="5" r="4" fill="#E8A858" stroke="#B88030" stroke-width="0.8"/><path d="M0 13.5V10.5Q0 8.5 2.5 8.5H8Q10 8.5 10 10.5V12.5H6V13.5Z" fill="#2A64E8"/><path d="M4.5 9V12" stroke="#fff" stroke-width="1"/><circle cx="11.5" cy="5" r="3.8" fill="#E87020" stroke="#101010" stroke-width="1.3"/><path d="M8 12.5V10.5Q8 8.5 10 8.5H14Q15.5 8.5 15.5 10.5V12.5Z" fill="#1EA01E"/></svg>
<div class="t" style="left:949px;top:374px;letter-spacing:-0.15px">New York Times</div>
<div class="a" style="left:218px;top:393px;width:1px;height:21px;background:#ACA899"></div>
<div class="a" style="left:284px;top:393px;width:1px;height:21px;background:#ACA899"></div>
<div class="a" style="left:543px;top:393px;width:1px;height:21px;background:#ACA899"></div>
<div class="a" style="left:612px;top:393px;width:1px;height:21px;background:#ACA899"></div>
<div class="a" style="left:724px;top:393px;width:1px;height:21px;background:#ACA899"></div>
<div class="a" style="left:799px;top:393px;width:1px;height:21px;background:#ACA899"></div>
<div class="a" style="left:867px;top:393px;width:1px;height:21px;background:#ACA899"></div>
<div class="a" style="left:925px;top:393px;width:1px;height:21px;background:#ACA899"></div>
<div class="a" style="left:1031px;top:393px;width:1px;height:21px;background:#ACA899"></div>
<div class="a" style="left:1093px;top:393px;width:1px;height:21px;background:#ACA899"></div>
<div class="a" style="left:186px;top:414px;width:907px;height:1px;background:#ACA899"></div>
<div class="a" style="left:195px;top:397px;width:13px;height:13px;border:1px solid #1C5180;background:linear-gradient(135deg,#DCDCD7,#FBFBF9)"></div>
<div class="t" style="left:287px;top:396px;letter-spacing:-0.15px">Read about Ukrainian history</div>
<svg style="left:547px;top:395px;" width="16" height="16" viewBox="0 0 16 16"><circle cx="8" cy="8" r="7.2" fill="#E8761E" stroke="#C85A10" stroke-width="0.8"/><circle cx="8" cy="8" r="3" fill="#fff" stroke="#E89050" stroke-width="0.6"/><path d="M2.5 7Q3.5 2.5 8 2" stroke="#F8C890" stroke-width="1.6" fill="none"/></svg>
<div class="t" style="left:567px;top:396px;letter-spacing:-0.15px">Normal</div>
<div class="t" style="left:613px;width:111px;text-align:center;top:396px;letter-spacing:-0.15px">04.11.2005 11:24:35</div>
<div class="t" style="left:725px;width:74px;text-align:center;top:398px;letter-spacing:-0.15px">6d 22h 50m</div>
<svg style="left:805px;top:395px;" width="13" height="16" viewBox="0 0 13 16"><defs><linearGradient id="g35" x1="0" y1="0" x2="1" y2="1"><stop offset="0" stop-color="#FFFFFF"/><stop offset="0.5" stop-color="#F0F6FF"/><stop offset="1" stop-color="#A8CCF4"/></linearGradient></defs><path d="M0.5 0.5H8.5L12.5 4.5V15.5H0.5Z" fill="url(#g35)" stroke="#7A9AC8" stroke-width="1"/><path d="M8.5 0.5V4.5H12.5Z" fill="#4A90F0" stroke="#5A80C0" stroke-width="0.8"/></svg>
<div class="t" style="left:823px;top:398px;letter-spacing:-0.15px">Created</div>
<div class="t" style="left:868px;width:57px;text-align:center;top:398px">0 %</div>
<svg style="left:929px;top:397px;" width="16" height="14" viewBox="0 0 16 14"><circle cx="5" cy="5" r="4" fill="#E8A858" stroke="#B88030" stroke-width="0.8"/><path d="M0 13.5V10.5Q0 8.5 2.5 8.5H8Q10 8.5 10 10.5V12.5H6V13.5Z" fill="#2A64E8"/><path d="M4.5 9V12" stroke="#fff" stroke-width="1"/><circle cx="11.5" cy="5" r="3.8" fill="#E87020" stroke="#101010" stroke-width="1.3"/><path d="M8 12.5V10.5Q8 8.5 10 8.5H14Q15.5 8.5 15.5 10.5V12.5Z" fill="#1EA01E"/></svg>
<div class="t" style="left:949px;top:396px;letter-spacing:-0.15px">New York Times</div>
<div class="a" style="left:1095px;top:85px;width:185px;height:563px;background:#ECE9D8"></div>
<div class="a" style="left:1095px;top:85px;width:1px;height:563px;background:#F8F6F0"></div>
<div class="a" style="left:1095px;top:109px;width:1px;height:233px;background:#D8D4C4"></div>
<div class="a" style="left:1097px;top:87px;width:182px;height:22px;background:linear-gradient(#FDFDFB,#EFEEE8);border:1px solid #D6D3C2;border-radius:3px"></div>
<div class="t" style="left:1101px;top:93px;letter-spacing:-0.2px">Categories Bar</div>
<svg style="left:1229px;top:92px;" width="13" height="13" viewBox="0 0 13 13"><rect x="0" y="0" width="13" height="13" rx="2" fill="#2A64E6"/><rect x="3" y="3" width="7" height="7" fill="#6E9CF4" stroke="#fff" stroke-width="1.4"/></svg>
<svg style="left:1245px;top:92px;" width="11" height="12" viewBox="0 0 11 12"><path d="M2 0.8H9.5V2L8 3.2V6.5L10.5 8.2V9.2H1V8.2L3.5 6.5V3.2L2 2Z" fill="#D8E6FF" stroke="#1A48D0" stroke-width="1.2"/><path d="M6 3.5V8" stroke="#3A78F0" stroke-width="1.4"/><path d="M5.7 9.2V12" stroke="#1A48D0" stroke-width="1.5"/></svg>
<svg style="left:1261px;top:92px;" width="12" height="12" viewBox="0 0 12 12"><defs><linearGradient id="g36" x1="0" y1="0" x2="1" y2="1"><stop offset="0" stop-color="#F09048"/><stop offset="0.5" stop-color="#E06A28"/><stop offset="1" stop-color="#C84A10"/></linearGradient></defs><rect x="0" y="0" width="12" height="12" rx="1" fill="url(#g36)"/><path d="M3 3L9 9M9 3L3 9" stroke="#fff" stroke-width="2"/></svg>
<div class="a" style="left:1097px;top:111px;width:182px;height:230px;background:#fff;border:1px solid #7F9DB9"></div>
<div class="a" style="left:1107px;top:121px;width:10px;height:1px;background:repeating-linear-gradient(90deg,#A0A0A0 0 1px,transparent 1px 2px)"></div>
<svg style="left:1120px;top:115px;" width="16" height="14" viewBox="0 0 16 14"><circle cx="5" cy="5" r="4" fill="#E8A858" stroke="#B88030" stroke-width="0.8"/><path d="M0 13.5V10.5Q0 8.5 2.5 8.5H8Q10 8.5 10 10.5V12.5H6V13.5Z" fill="#2A64E8"/><path d="M4.5 9V12" stroke="#fff" stroke-width="1"/><circle cx="11.5" cy="5" r="3.8" fill="#E87020" stroke="#101010" stroke-width="1.3"/><path d="M8 12.5V10.5Q8 8.5 10 8.5H14Q15.5 8.5 15.5 10.5V12.5Z" fill="#1EA01E"/></svg>
<div class="t" style="left:1140px;top:115px;letter-spacing:-0.25px">New York Times</div>
<div class="a" style="left:1097px;top:345px;width:182px;height:22px;background:linear-gradient(#FDFDFB,#EFEEE8);border:1px solid #D6D3C2;border-radius:3px"></div>
<div class="t" style="left:1101px;top:350px;">Filters Bar</div>
<svg style="left:1229px;top:350px;" width="13" height="13" viewBox="0 0 13 13"><rect x="0" y="0" width="13" height="13" rx="2" fill="#2A64E6"/><rect x="3" y="3" width="7" height="7" fill="#6E9CF4" stroke="#fff" stroke-width="1.4"/></svg>
<svg style="left:1245px;top:350px;" width="11" height="12" viewBox="0 0 11 12"><path d="M2 0.8H9.5V2L8 3.2V6.5L10.5 8.2V9.2H1V8.2L3.5 6.5V3.2L2 2Z" fill="#D8E6FF" stroke="#1A48D0" stroke-width="1.2"/><path d="M6 3.5V8" stroke="#3A78F0" stroke-width="1.4"/><path d="M5.7 9.2V12" stroke="#1A48D0" stroke-width="1.5"/></svg>
<svg style="left:1261px;top:350px;" width="12" height="12" viewBox="0 0 12 12"><defs><linearGradient id="g37" x1="0" y1="0" x2="1" y2="1"><stop offset="0" stop-color="#F09048"/><stop offset="0.5" stop-color="#E06A28"/><stop offset="1" stop-color="#C84A10"/></linearGradient></defs><rect x="0" y="0" width="12" height="12" rx="1" fill="url(#g37)"/><path d="M3 3L9 9M9 3L3 9" stroke="#fff" stroke-width="2"/></svg>
<div class="t" style="left:1106px;top:376px;font-weight:bold;letter-spacing:0.35px">Filter By Done:</div>
<div class="a" style="left:1105px;top:393px;width:121px;height:21px;background:#fff;border:1px solid #7F9DB9"></div>
<div class="t" style="left:1109px;top:397px;">All</div>
<div class="a" style="left:1209px;top:395px;width:15px;height:17px;background:linear-gradient(#CADCFC,#AAC6F5);border-radius:2px"></div>
<svg style="left:1212px;top:401px;" width="9" height="6" viewBox="0 0 9 6"><path d="M1 1L4.5 4.5L8 1" stroke="#34466E" stroke-width="2.2" fill="none"/></svg>
<div class="t" style="left:1106px;top:424px;font-weight:bold;letter-spacing:0.42px">Filter By Due Date:</div>
<svg style="left:1108px;top:449px;" width="4" height="7" viewBox="0 0 4 7"><path d="M4 0V7L0 3.5Z" fill="#000"/></svg>
<svg style="left:1242px;top:449px;" width="4" height="7" viewBox="0 0 4 7"><path d="M0 0V7L4 3.5Z" fill="#000"/></svg>
<div class="t" style="left:1141px;top:447px;">Октябрь 2005</div>
<div class="a" style="left:1102px;top:461px;width:150px;height:1px;background:#000"></div>
<div class="t" style="left:1111px;width:18px;text-align:right;top:464px;padding-right:0">П</div>
<div class="t" style="left:1129px;width:18px;text-align:right;top:464px;padding-right:0">В</div>
<div class="t" style="left:1147px;width:18px;text-align:right;top:464px;padding-right:0">С</div>
<div class="t" style="left:1165px;width:18px;text-align:right;top:464px;padding-right:0">Ч</div>
<div class="t" style="left:1183px;width:18px;text-align:right;top:464px;padding-right:0">П</div>
<div class="t" style="left:1201px;width:18px;text-align:right;top:464px;padding-right:0">С</div>
<div class="t" style="left:1219px;width:18px;text-align:right;top:464px;padding-right:0">В</div>
<div class="a" style="left:1114px;top:477px;width:126px;height:1px;background:#ACA899"></div>
<div class="t" style="left:1111px;width:18px;text-align:right;top:481px;color:#ACA899">26</div>
<div class="t" style="left:1129px;width:18px;text-align:right;top:481px;color:#ACA899">27</div>
<div class="t" style="left:1147px;width:18px;text-align:right;top:481px;color:#ACA899">28</div>
<div class="t" style="left:1165px;width:18px;text-align:right;top:481px;color:#ACA899">29</div>
<div class="t" style="left:1183px;width:18px;text-align:right;top:481px;color:#ACA899">30</div>
<div class="t" style="left:1201px;width:18px;text-align:right;top:481px;color:#000">1</div>
<div class="t" style="left:1219px;width:18px;text-align:right;top:481px;color:#000">2</div>
<div class="t" style="left:1111px;width:18px;text-align:right;top:496px;color:#000">3</div>
<div class="t" style="left:1129px;width:18px;text-align:right;top:496px;color:#000">4</div>
<div class="t" style="left:1147px;width:18px;text-align:right;top:496px;color:#000">5</div>
<div class="t" style="left:1165px;width:18px;text-align:right;top:496px;color:#000">6</div>
<div class="t" style="left:1183px;width:18px;text-align:right;top:496px;color:#000">7</div>
<div class="t" style="left:1201px;width:18px;text-align:right;top:496px;color:#000">8</div>
<div class="t" style="left:1219px;width:18px;text-align:right;top:496px;color:#000">9</div>
<div class="t" style="left:1111px;width:18px;text-align:right;top:511px;color:#000">10</div>
<div class="t" style="left:1129px;width:18px;text-align:right;top:511px;color:#000">11</div>
<div class="t" style="left:1147px;width:18px;text-align:right;top:511px;color:#000">12</div>
<div class="t" style="left:1165px;width:18px;text-align:right;top:511px;color:#000">13</div>
<div class="t" style="left:1183px;width:18px;text-align:right;top:511px;color:#000">14</div>
<div class="t" style="left:1201px;width:18px;text-align:right;top:511px;color:#000">15</div>
<div class="t" style="left:1219px;width:18px;text-align:right;top:511px;color:#000">16</div>
<div class="t" style="left:1111px;width:18px;text-align:right;top:526px;color:#000">17</div>
<div class="t" style="left:1129px;width:18px;text-align:right;top:526px;color:#000">18</div>
<div class="t" style="left:1147px;width:18px;text-align:right;top:526px;color:#000">19</div>
<div class="t" style="left:1165px;width:18px;text-align:right;top:526px;color:#000">20</div>
<div class="t" style="left:1183px;width:18px;text-align:right;top:526px;color:#000">21</div>
<div class="t" style="left:1201px;width:18px;text-align:right;top:526px;color:#000">22</div>
<div class="t" style="left:1219px;width:18px;text-align:right;top:526px;color:#000">23</div>
<div class="t" style="left:1111px;width:18px;text-align:right;top:541px;color:#000">24</div>
<div class="t" style="left:1129px;width:18px;text-align:right;top:541px;color:#000">25</div>
<div class="t" style="left:1147px;width:18px;text-align:right;top:541px;color:#000">26</div>
<div class="t" style="left:1165px;width:18px;text-align:right;top:541px;color:#000">27</div>
<div class="a" style="left:1186px;top:539px;width:18px;height:15px;background:#316AC5;outline:1px dotted #C04000;outline-offset:-1px"></div>
<div class="t" style="left:1183px;width:18px;text-align:right;top:541px;color:#fff">28</div>
<div class="t" style="left:1201px;width:18px;text-align:right;top:541px;color:#000">29</div>
<div class="t" style="left:1219px;width:18px;text-align:right;top:541px;color:#000">30</div>
<div class="t" style="left:1111px;width:18px;text-align:right;top:556px;color:#000">31</div>
<div class="t" style="left:1129px;width:18px;text-align:right;top:556px;color:#ACA899">1</div>
<div class="t" style="left:1147px;width:18px;text-align:right;top:556px;color:#ACA899">2</div>
<div class="t" style="left:1165px;width:18px;text-align:right;top:556px;color:#ACA899">3</div>
<div class="t" style="left:1183px;width:18px;text-align:right;top:556px;color:#ACA899">4</div>
<div class="t" style="left:1201px;width:18px;text-align:right;top:556px;color:#ACA899">5</div>
<div class="t" style="left:1219px;width:18px;text-align:right;top:556px;color:#ACA899">6</div>
<div class="a" style="left:1114px;top:569px;width:126px;height:1px;background:#ACA899"></div>
<div class="a" style="left:1121px;top:575px;width:47px;height:19px;border:1px solid #003C74;border-radius:3px;background:linear-gradient(#FFFFFF,#F0F0EA 70%,#E3E2D9)"></div>
<div class="t" style="left:1123px;width:47px;text-align:center;top:577px;font-weight:bold;font-size:13px;line-height:15px;letter-spacing:0.6px;color:#ACA899">Today</div>
<div class="a" style="left:1187px;top:575px;width:47px;height:19px;border:1px solid #003C74;border-radius:3px;background:linear-gradient(#FFFFFF,#F0F0EA 70%,#E3E2D9)"></div>
<div class="t" style="left:1189px;width:47px;text-align:center;top:577px;font-weight:bold;font-size:13px;line-height:15px;letter-spacing:0.6px;color:#ACA899">Clear</div>
<div class="a" style="left:1105px;top:609px;width:145px;height:21px;background:#fff;border:1px solid #7F9DB9"></div>
<div class="t" style="left:1109px;top:613px;">is less than or equal to</div>
<div class="a" style="left:1233px;top:611px;width:15px;height:17px;background:linear-gradient(#CADCFC,#AAC6F5);border-radius:2px"></div>
<svg style="left:1236px;top:617px;" width="9" height="6" viewBox="0 0 9 6"><path d="M1 1L4.5 4.5L8 1" stroke="#34466E" stroke-width="2.2" fill="none"/></svg>
</body></html>
